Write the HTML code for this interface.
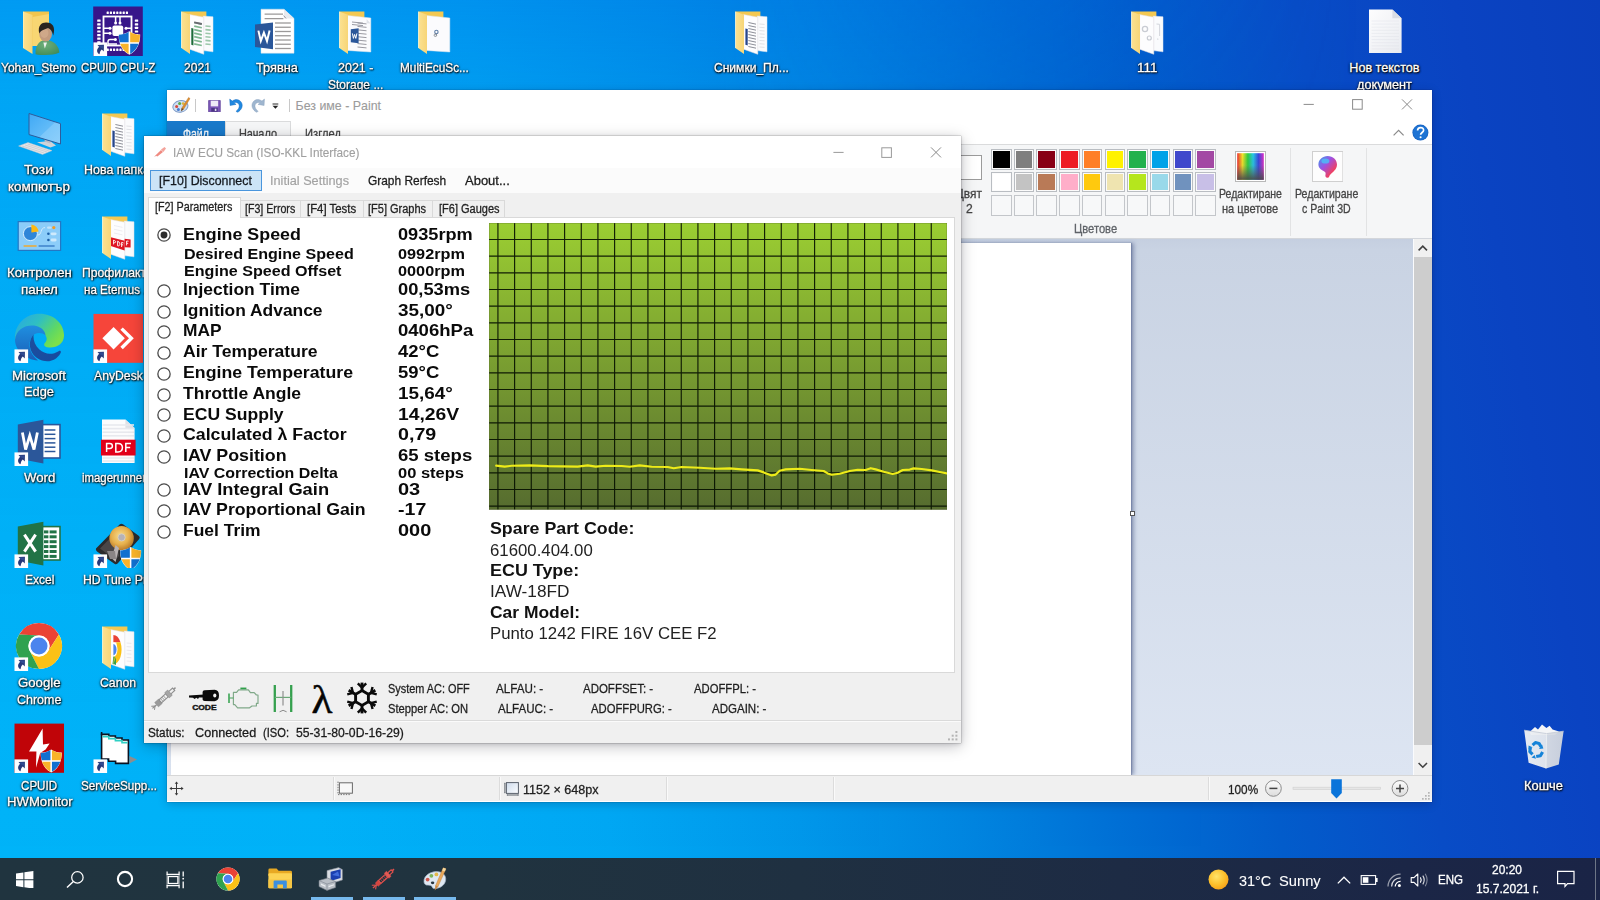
<!DOCTYPE html>
<html><head><meta charset="utf-8"><title>desktop</title><style>
html,body{margin:0;padding:0;}
body{width:1600px;height:900px;overflow:hidden;position:relative;font-family:"Liberation Sans",sans-serif;background:#0a78d7;}
body div,body svg,body span{position:absolute;box-sizing:border-box;}
.t{white-space:nowrap;line-height:1;transform-origin:0 0;}
</style></head>
<body>
<!-- p_desktop -->
<div style="left:0;top:0;width:1600px;height:900px;background:linear-gradient(80deg,#00b4f8 0.7%,#00b2f8 18.9%,#00a8f3 35.3%,#0098ea 46.2%,#0086e0 55.3%,#0070d5 64.4%,#025ccb 73.5%,#084cc6 82.6%,#0a43c2 91.7%,#0a3fbc 100%);"></div>
<div style="left:0;top:0;width:1600px;height:900px;background:linear-gradient(to bottom,rgba(0,100,230,.31) 0%,rgba(0,100,230,.175) 10%,rgba(0,100,230,.10) 30%,rgba(0,100,230,.04) 60%,rgba(0,100,230,0) 100%);-webkit-mask-image:linear-gradient(to right,#000 0,#000 45%,transparent 85%);mask-image:linear-gradient(to right,#000 0,#000 45%,transparent 85%);"></div>
<svg style="left:15px;top:5.5px;" width="50" height="50" viewBox="0 0 50 50"><defs><linearGradient id="uf" x1="0" x2="1"><stop offset="0" stop-color="#fff0ba"/><stop offset=".15" stop-color="#fbe08f"/><stop offset="1" stop-color="#f7d577"/></linearGradient><radialGradient id="ub" cx=".4" cy=".3" r=".8"><stop offset="0" stop-color="#6faf7a"/><stop offset="1" stop-color="#3f8a58"/></radialGradient></defs><path d="M8 5.400 L34 5.400 L34 40 L17 40 L17 12Z" fill="#f2c54d"/><path d="M17.500 11 L34 8 L34 40 L17.500 40Z" fill="#f8d672"/><path d="M8 5.600 L17.500 9 L17.500 48 L8 42Z" fill="url(#uf)"/><path d="M20.6 48.2 C20 42 22.6 36.4 27.6 34.6 L33.8 34.4 C40 35.6 43.8 40.4 44.4 46.6 C38 49.6 27.6 49.6 20.6 48.2Z" fill="url(#ub)"/><path d="M28.4 36.4 L29.8 42.4 L32 36.4Z" fill="#eef3ef"/><ellipse cx="30.6" cy="27.8" rx="6.4" ry="7.6" fill="#c39b7e"/><ellipse cx="29.4" cy="27" rx="4" ry="5" fill="#d2ab8c" opacity=".8"/><path d="M24.200 27.400 C22.400 19 27 16.200 31.400 16.400 C37.600 16.400 40.800 21 38.200 29.400 C37.400 25.400 35.600 23 33 22 C29.600 23.600 26.400 23.800 24.200 27.400Z" fill="#2a2420"/></svg>
<span class="t" style="left:1.31px;top:62.00px;font-size:12.6px;color:#fff;transform:scaleX(0.9519);-webkit-text-stroke:.3px #fff;text-shadow:0 1px 2px rgba(0,0,0,.95),0 0 3px rgba(0,0,0,.8),1px 1px 1.5px rgba(0,0,0,.75),0 0 1px rgba(0,0,0,.6);">Yohan_Stemo</span>
<svg style="left:93px;top:5.5px;" width="50" height="50" viewBox="0 0 50 50"><rect x="0.2" y="0.5" width="49.6" height="49.5" fill="#37168a"/><rect x="10.5" y="10.5" width="28" height="29" fill="none" stroke="#fff" stroke-width="1.8"/><rect x="13.6" y="5.6" width="2.2" height="2.4" rx=".5" fill="#fff"/><rect x="13.6" y="42.6" width="2.2" height="2.4" rx=".5" fill="#fff"/><rect x="16.8" y="5.6" width="2.2" height="2.4" rx=".5" fill="#fff"/><rect x="16.8" y="42.6" width="2.2" height="2.4" rx=".5" fill="#fff"/><rect x="20" y="5.6" width="2.2" height="2.4" rx=".5" fill="#fff"/><rect x="20" y="42.6" width="2.2" height="2.4" rx=".5" fill="#fff"/><rect x="23.2" y="5.6" width="2.2" height="2.4" rx=".5" fill="#fff"/><rect x="23.2" y="42.6" width="2.2" height="2.4" rx=".5" fill="#fff"/><rect x="26.4" y="5.6" width="2.2" height="2.4" rx=".5" fill="#fff"/><rect x="26.4" y="42.6" width="2.2" height="2.4" rx=".5" fill="#fff"/><rect x="29.6" y="5.6" width="2.2" height="2.4" rx=".5" fill="#fff"/><rect x="29.6" y="42.6" width="2.2" height="2.4" rx=".5" fill="#fff"/><rect x="32.8" y="5.6" width="2.2" height="2.4" rx=".5" fill="#fff"/><rect x="32.8" y="42.6" width="2.2" height="2.4" rx=".5" fill="#fff"/><rect x="4.2" y="13.6" width="3.4" height="2.2" rx=".5" fill="#fff"/><rect x="41.8" y="13.6" width="3.4" height="2.2" rx=".5" fill="#fff"/><rect x="4.2" y="17.2" width="3.4" height="2.2" rx=".5" fill="#fff"/><rect x="41.8" y="17.2" width="3.4" height="2.2" rx=".5" fill="#fff"/><rect x="4.2" y="20.8" width="3.4" height="2.2" rx=".5" fill="#fff"/><rect x="41.8" y="20.8" width="3.4" height="2.2" rx=".5" fill="#fff"/><rect x="4.2" y="24.4" width="3.4" height="2.2" rx=".5" fill="#fff"/><rect x="41.8" y="24.4" width="3.4" height="2.2" rx=".5" fill="#fff"/><rect x="4.2" y="28" width="3.4" height="2.2" rx=".5" fill="#fff"/><rect x="41.8" y="28" width="3.4" height="2.2" rx=".5" fill="#fff"/><rect x="4.2" y="31.6" width="3.4" height="2.2" rx=".5" fill="#fff"/><rect x="41.8" y="31.6" width="3.4" height="2.2" rx=".5" fill="#fff"/><rect x="4.2" y="35.2" width="3.4" height="2.2" rx=".5" fill="#fff"/><rect x="41.8" y="35.2" width="3.4" height="2.2" rx=".5" fill="#fff"/><rect x="19.4" y="19.6" width="10.8" height="10.4" rx="2" fill="#fff"/><path d="M22.6 11 L22.6 16.4 M27 11 L27 16.4 M11 22.2 L16.6 22.2 M11 27.2 L16.6 27.2 M38 22.2 L33 22.2 M15 39 L15 35.6 Q15 33.4 17.2 33.4 L21.6 33.4 M15 38 L24 38" stroke="#fff" stroke-width="1.5" fill="none"/><circle cx="22.6" cy="17" r="1.5" fill="#fff"/><circle cx="27" cy="17" r="1.5" fill="#fff"/><circle cx="17" cy="22.2" r="1.5" fill="#fff"/><circle cx="17" cy="27.2" r="1.5" fill="#fff"/><circle cx="33" cy="22.2" r="1.5" fill="#fff"/><circle cx="22.4" cy="33.4" r="1.5" fill="#fff"/><g transform="translate(36.4 37) scale(1.1)"><path d="M0 -11.5 C3.5 -9 7 -8.3 10.5 -8.3 C10.5 0 8 7 0 11.5 C-8 7 -10.5 0 -10.5 -8.3 C-7 -8.3 -3.5 -9 0 -11.5Z" fill="#fff" transform="scale(.935)"/><path d="M-0.7 -10.2 C-3.7 -8.2 -6.6 -7.5 -9.6 -7.4 C-9.6 -4.6 -9.3 -2.6 -8.8 -0.7 L-0.7 -0.7Z" fill="#1170d0"/><path d="M0.7 -10.2 C3.7 -8.2 6.6 -7.5 9.6 -7.4 C9.6 -4.6 9.3 -2.6 8.8 -0.7 L0.7 -0.7Z" fill="#f9b32a"/><path d="M-8.4 0.7 L-0.7 0.7 L-0.7 10 C-4.8 7.4 -7.2 4.3 -8.4 0.7Z" fill="#f9b32a"/><path d="M8.4 0.7 L0.7 0.7 L0.7 10 C4.8 7.4 7.2 4.3 8.4 0.7Z" fill="#1170d0"/></g><g transform="translate(0.5 36.4)"><rect x="0" y="0" width="13.6" height="13.6" fill="#fdfdff"/><path d="M4.0 2.7 L10.4 2.4 L10.3 9.0 L8.3 7.0 C6.9 8.2 6.3 9.8 6.0 11.9 C3.3 10.6 2.5 7.4 5.6 4.4Z" fill="#27397a"/><path d="M5 3.2 L9.8 3 L9.8 6.4 C8 5.6 6.6 5.2 5.6 4.4Z" fill="#34509a" opacity=".8"/></g></svg>
<span class="t" style="left:81.31px;top:62.00px;font-size:12.6px;color:#fff;transform:scaleX(0.9164);-webkit-text-stroke:.3px #fff;text-shadow:0 1px 2px rgba(0,0,0,.95),0 0 3px rgba(0,0,0,.8),1px 1px 1.5px rgba(0,0,0,.75),0 0 1px rgba(0,0,0,.6);">CPUID CPU-Z</span>
<svg style="left:172px;top:5.5px;" width="50" height="50" viewBox="0 0 50 50"><defs><linearGradient id="fgxls" x1="0" x2="1"><stop offset="0" stop-color="#fff0ba"/><stop offset=".12" stop-color="#fbe08f"/><stop offset="1" stop-color="#f7d577"/></linearGradient></defs><path d="M9.3 5.4 L34.4 5.4 L34.4 13 L17 13Z" fill="#f3c851"/><path d="M31.2 10 L41 10.8 L41 45.8 L31.2 44.6Z" fill="#fafbfd" stroke="#dfe5ee" stroke-width=".5"/><path d="M17.6 8.6 L31.8 11.2 L31.8 48.3 L17.6 43.2Z" fill="#fdfdfe" stroke="#e6dcdc" stroke-width=".5"/><path d="M19.3 22 L21.4 22.5 L21.4 39.5 L19.3 38.8Z" fill="#1d6b3a"/><path d="M22.2 16.5 L29.8 18.2" stroke="#7fb791" stroke-width="1.7"/><path d="M22.2 20.05 L29.8 21.75" stroke="#7fb791" stroke-width="1.7"/><path d="M22.2 23.6 L29.8 25.3" stroke="#7fb791" stroke-width="1.7"/><path d="M22.2 27.15 L29.8 28.85" stroke="#7fb791" stroke-width="1.7"/><path d="M22.2 30.7 L29.8 32.4" stroke="#7fb791" stroke-width="1.7"/><path d="M22.2 34.25 L29.8 35.95" stroke="#7fb791" stroke-width="1.7"/><path d="M22.2 37.8 L29.8 39.5" stroke="#7fb791" stroke-width="1.7"/><path d="M22.2 16.3 L29.8 18" stroke="#6a6a72" stroke-width="1.8"/><path d="M33.4 20 L38.6 20.5" stroke="#9cc7aa" stroke-width="1.6"/><path d="M33.4 23.6 L38.6 24.1" stroke="#9cc7aa" stroke-width="1.6"/><path d="M33.4 27.2 L38.6 27.7" stroke="#9cc7aa" stroke-width="1.6"/><path d="M33.4 30.8 L38.6 31.3" stroke="#9cc7aa" stroke-width="1.6"/><path d="M33.4 34.4 L38.6 34.9" stroke="#9cc7aa" stroke-width="1.6"/><path d="M33.4 38 L38.6 38.5" stroke="#9cc7aa" stroke-width="1.6"/><path d="M9.3 5.6 L18 8.8 L18 48 L9.3 42Z" fill="url(#fgxls)"/><path d="M9.5 5.8 L9.5 42" stroke="#fff6d0" stroke-width=".7"/></svg>
<span class="t" style="left:184.31px;top:62.00px;font-size:12.6px;color:#fff;transform:scaleX(0.9591);-webkit-text-stroke:.3px #fff;text-shadow:0 1px 2px rgba(0,0,0,.95),0 0 3px rgba(0,0,0,.8),1px 1px 1.5px rgba(0,0,0,.75),0 0 1px rgba(0,0,0,.6);">2021</span>
<svg style="left:251px;top:5.5px;" width="50" height="50" viewBox="0 0 50 50"><path d="M10 3.2 L33 3.2 L43 12.4 L43 47.2 L10 47.2Z" fill="#fff" stroke="#d6dbe4" stroke-width=".5"/><path d="M33 3.2 L33 12.4 L43 12.4Z" fill="#e7eaef"/><path d="M32.6 9.6 L35 12.4" stroke="#9a9aa0" stroke-width="1"/><path d="M13.6 8.2 L32 8.2 M13.6 12.6 L32.4 12.6" stroke="#9b9999" stroke-width="1.3"/><path d="M24 17 L39.8 17" stroke="#9b9999" stroke-width="1.3"/><path d="M24 21.25 L39.8 21.25" stroke="#9b9999" stroke-width="1.3"/><path d="M24 25.5 L39.8 25.5" stroke="#9b9999" stroke-width="1.3"/><path d="M24 29.75 L39.8 29.75" stroke="#9b9999" stroke-width="1.3"/><path d="M24 34 L39.8 34" stroke="#9b9999" stroke-width="1.3"/><path d="M24 38.25 L39.8 38.25" stroke="#9b9999" stroke-width="1.3"/><path d="M24 42.5 L39.8 42.5" stroke="#9b9999" stroke-width="1.3"/><path d="M4 18.4 L22 16.4 L22 43.2 L4 41Z" fill="#2b579a"/><path d="M7.4 24.6 L9.8 35 L12.9 26.6 L16 35 L18.6 24.6" stroke="#fff" stroke-width="2" fill="none" stroke-linejoin="miter"/></svg>
<span class="t" style="left:256.31px;top:62.00px;font-size:12.6px;color:#fff;transform:scaleX(1.0135);-webkit-text-stroke:.3px #fff;text-shadow:0 1px 2px rgba(0,0,0,.95),0 0 3px rgba(0,0,0,.8),1px 1px 1.5px rgba(0,0,0,.75),0 0 1px rgba(0,0,0,.6);">Трявна</span>
<svg style="left:330px;top:5.5px;" width="50" height="50" viewBox="0 0 50 50"><defs><linearGradient id="fgdoc" x1="0" x2="1"><stop offset="0" stop-color="#fff0ba"/><stop offset=".12" stop-color="#fbe08f"/><stop offset="1" stop-color="#f7d577"/></linearGradient></defs><path d="M9.3 5.4 L34.4 5.4 L34.4 13 L17 13Z" fill="#f3c851"/><path d="M17 9.4 L40.8 12 L40.8 46 L17 44.4Z" fill="#fbfbfd" stroke="#e1e4ea" stroke-width=".5"/><path d="M27.5 17 L36.5 17.9" stroke="#9a9aa2" stroke-width="1"/><path d="M27.5 20.4286 L36.5 21.3286" stroke="#9a9aa2" stroke-width="1"/><path d="M27.5 23.8571 L36.5 24.7571" stroke="#9a9aa2" stroke-width="1"/><path d="M27.5 27.2857 L36.5 28.1857" stroke="#9a9aa2" stroke-width="1"/><path d="M27.5 30.7143 L36.5 31.6143" stroke="#9a9aa2" stroke-width="1"/><path d="M27.5 34.1429 L36.5 35.0429" stroke="#9a9aa2" stroke-width="1"/><path d="M27.5 37.5714 L36.5 38.4714" stroke="#9a9aa2" stroke-width="1"/><path d="M27.5 41 L36.5 41.9" stroke="#9a9aa2" stroke-width="1"/><path d="M22 16 L33 17.1" stroke="#9a9aa2" stroke-width="1"/><path d="M22 18.5 L33 19.6" stroke="#9a9aa2" stroke-width="1"/><path d="M36.6 13 L40.6 17.6 L36.6 17.2Z" fill="#dfe2e8"/><path d="M20.8 23.2 L28.6 22.2 L28.6 37.2 L20.8 36.2Z" fill="#2b579a"/><path d="M22.4 27.4 L23.4 32.4 L24.6 28.4 L25.8 32.4 L26.9 27.4" stroke="#fff" stroke-width="1" fill="none"/><path d="M9.3 5.6 L18 8.8 L18 48 L9.3 42Z" fill="url(#fgdoc)"/><path d="M9.5 5.8 L9.5 42" stroke="#fff6d0" stroke-width=".7"/></svg>
<span class="t" style="left:337.81px;top:62.00px;font-size:12.6px;color:#fff;transform:scaleX(0.9907);-webkit-text-stroke:.3px #fff;text-shadow:0 1px 2px rgba(0,0,0,.95),0 0 3px rgba(0,0,0,.8),1px 1px 1.5px rgba(0,0,0,.75),0 0 1px rgba(0,0,0,.6);">2021 -</span>
<span class="t" style="left:327.81px;top:79.00px;font-size:12.6px;color:#fff;transform:scaleX(0.9531);-webkit-text-stroke:.3px #fff;text-shadow:0 1px 2px rgba(0,0,0,.95),0 0 3px rgba(0,0,0,.8),1px 1px 1.5px rgba(0,0,0,.75),0 0 1px rgba(0,0,0,.6);">Storage ...</span>
<svg style="left:409px;top:5.5px;" width="50" height="50" viewBox="0 0 50 50"><defs><linearGradient id="fggear" x1="0" x2="1"><stop offset="0" stop-color="#fff0ba"/><stop offset=".12" stop-color="#fbe08f"/><stop offset="1" stop-color="#f7d577"/></linearGradient></defs><path d="M9.3 5.4 L34.4 5.4 L34.4 13 L17 13Z" fill="#f3c851"/><path d="M17 9.4 L40.8 12 L40.8 46 L17 44.4Z" fill="#fbfbfd" stroke="#e1e4ea" stroke-width=".5"/><circle cx="27.4" cy="26" r="1.7" fill="none" stroke="#5f7fa8" stroke-width="1.1"/><path d="M26.2 29 L27.8 29.6 L27.4 27.6" fill="#6f7b8c"/><circle cx="26.4" cy="29.2" r="1.3" fill="none" stroke="#7a8088" stroke-width=".8"/><path d="M9.3 5.6 L18 8.8 L18 48 L9.3 42Z" fill="url(#fggear)"/><path d="M9.5 5.8 L9.5 42" stroke="#fff6d0" stroke-width=".7"/></svg>
<span class="t" style="left:400.31px;top:62.00px;font-size:12.6px;color:#fff;transform:scaleX(0.9374);-webkit-text-stroke:.3px #fff;text-shadow:0 1px 2px rgba(0,0,0,.95),0 0 3px rgba(0,0,0,.8),1px 1px 1.5px rgba(0,0,0,.75),0 0 1px rgba(0,0,0,.6);">MultiEcuSc...</span>
<svg style="left:726px;top:5.5px;" width="50" height="50" viewBox="0 0 50 50"><defs><linearGradient id="fgpic" x1="0" x2="1"><stop offset="0" stop-color="#fff0ba"/><stop offset=".12" stop-color="#fbe08f"/><stop offset="1" stop-color="#f7d577"/></linearGradient></defs><path d="M9.3 5.4 L34.4 5.4 L34.4 13 L17 13Z" fill="#f3c851"/><path d="M31.2 10 L41 10.8 L41 45.8 L31.2 44.6Z" fill="#fafbfd" stroke="#dfe5ee" stroke-width=".5"/><path d="M17.6 8.6 L31.8 11.2 L31.8 48.3 L17.6 43.2Z" fill="#fdfdfe" stroke="#e6dcdc" stroke-width=".5"/><path d="M19.4 22.5 L21.7 23.1 L21.7 39.6 L19.4 38.8Z" fill="#27468c"/><path d="M22.4 16.5 L30 18.172" stroke="#8d8f98" stroke-width="1"/><path d="M22.4 19.5 L30 21.172" stroke="#8d8f98" stroke-width="1"/><path d="M22.4 22.5 L30 24.172" stroke="#8d8f98" stroke-width="1"/><path d="M22.4 25.5 L30 27.172" stroke="#8d8f98" stroke-width="1"/><path d="M22.4 28.5 L30 30.172" stroke="#8d8f98" stroke-width="1"/><path d="M22.4 31.5 L30 33.172" stroke="#8d8f98" stroke-width="1"/><path d="M22.4 34.5 L30 36.172" stroke="#8d8f98" stroke-width="1"/><path d="M22.4 37.5 L30 39.172" stroke="#8d8f98" stroke-width="1"/><path d="M22.4 40.5 L30 42.172" stroke="#8d8f98" stroke-width="1"/><path d="M33.4 18 L38.6 18.416" stroke="#d9dbe0" stroke-width="0.8"/><path d="M33.4 21.2857 L38.6 21.7017" stroke="#d9dbe0" stroke-width="0.8"/><path d="M33.4 24.5714 L38.6 24.9874" stroke="#d9dbe0" stroke-width="0.8"/><path d="M33.4 27.8571 L38.6 28.2731" stroke="#d9dbe0" stroke-width="0.8"/><path d="M33.4 31.1429 L38.6 31.5589" stroke="#d9dbe0" stroke-width="0.8"/><path d="M33.4 34.4286 L38.6 34.8446" stroke="#d9dbe0" stroke-width="0.8"/><path d="M33.4 37.7143 L38.6 38.1303" stroke="#d9dbe0" stroke-width="0.8"/><path d="M33.4 41 L38.6 41.416" stroke="#d9dbe0" stroke-width="0.8"/><path d="M9.3 5.6 L18 8.8 L18 48 L9.3 42Z" fill="url(#fgpic)"/><path d="M9.5 5.8 L9.5 42" stroke="#fff6d0" stroke-width=".7"/></svg>
<span class="t" style="left:714.31px;top:62.00px;font-size:12.6px;color:#fff;transform:scaleX(0.9576);-webkit-text-stroke:.3px #fff;text-shadow:0 1px 2px rgba(0,0,0,.95),0 0 3px rgba(0,0,0,.8),1px 1px 1.5px rgba(0,0,0,.75),0 0 1px rgba(0,0,0,.6);">Снимки_Пл...</span>
<svg style="left:1122px;top:5.5px;" width="50" height="50" viewBox="0 0 50 50"><defs><linearGradient id="fggray" x1="0" x2="1"><stop offset="0" stop-color="#fff0ba"/><stop offset=".12" stop-color="#fbe08f"/><stop offset="1" stop-color="#f7d577"/></linearGradient></defs><path d="M9.3 5.4 L34.4 5.4 L34.4 13 L17 13Z" fill="#f3c851"/><path d="M31.2 10 L41 10.8 L41 45.8 L31.2 44.6Z" fill="#fafbfd" stroke="#dfe5ee" stroke-width=".5"/><path d="M17.6 8.6 L31.8 11.2 L31.8 48.3 L17.6 43.2Z" fill="#fdfdfe" stroke="#e6dcdc" stroke-width=".5"/><circle cx="23" cy="23" r="2.6" fill="none" stroke="#c9ccd3" stroke-width="1.3"/><circle cx="27.3" cy="32" r="2" fill="none" stroke="#c9ccd3" stroke-width="1.2"/><path d="M34.5 18 L37.6 18.3 L37.6 30 M35 33 L36.4 33.2" stroke="#d3d6dc" stroke-width="1" fill="none"/><path d="M9.3 5.6 L18 8.8 L18 48 L9.3 42Z" fill="url(#fggray)"/><path d="M9.5 5.8 L9.5 42" stroke="#fff6d0" stroke-width=".7"/></svg>
<span class="t" style="left:1137.31px;top:62.00px;font-size:12.6px;color:#fff;transform:scaleX(1.0642);-webkit-text-stroke:.3px #fff;text-shadow:0 1px 2px rgba(0,0,0,.95),0 0 3px rgba(0,0,0,.8),1px 1px 1.5px rgba(0,0,0,.75),0 0 1px rgba(0,0,0,.6);">111</span>
<svg style="left:1359px;top:5.5px;" width="50" height="50" viewBox="0 0 50 50"><defs><linearGradient id="td" x1="0" y1="0" x2="1" y2="1"><stop offset="0" stop-color="#fdfdfe"/><stop offset="1" stop-color="#e9ebf0"/></linearGradient></defs><path d="M10 3.5 L33.4 3.5 L42.6 12.2 L42.6 47 L10 47Z" fill="url(#td)"/><path d="M33.4 3.5 L33.4 12.2 L42.6 12.2Z" fill="#dadde4"/><path d="M12.6 15 L40 15" stroke="#e1e3e8" stroke-width=".5"/><path d="M12.6 18.1 L40 18.1" stroke="#e1e3e8" stroke-width=".5"/><path d="M12.6 21.2 L40 21.2" stroke="#e1e3e8" stroke-width=".5"/><path d="M12.6 24.3 L40 24.3" stroke="#e1e3e8" stroke-width=".5"/><path d="M12.6 27.4 L40 27.4" stroke="#e1e3e8" stroke-width=".5"/><path d="M12.6 30.5 L40 30.5" stroke="#e1e3e8" stroke-width=".5"/><path d="M12.6 33.6 L40 33.6" stroke="#e1e3e8" stroke-width=".5"/><path d="M12.6 36.7 L40 36.7" stroke="#e1e3e8" stroke-width=".5"/><path d="M12.6 39.8 L40 39.8" stroke="#e1e3e8" stroke-width=".5"/><path d="M12.6 42.9 L40 42.9" stroke="#e1e3e8" stroke-width=".5"/></svg>
<span class="t" style="left:1349.31px;top:62.00px;font-size:12.6px;color:#fff;-webkit-text-stroke:.3px #fff;text-shadow:0 1px 2px rgba(0,0,0,.95),0 0 3px rgba(0,0,0,.8),1px 1px 1.5px rgba(0,0,0,.75),0 0 1px rgba(0,0,0,.6);">Нов текстов</span>
<span class="t" style="left:1356.81px;top:79.00px;font-size:12.6px;color:#fff;transform:scaleX(1.0062);-webkit-text-stroke:.3px #fff;text-shadow:0 1px 2px rgba(0,0,0,.95),0 0 3px rgba(0,0,0,.8),1px 1px 1.5px rgba(0,0,0,.75),0 0 1px rgba(0,0,0,.6);">документ</span>
<svg style="left:14px;top:108px;" width="50" height="50" viewBox="0 0 50 50"><defs><linearGradient id="pc" x1="0" y1="0" x2="1" y2="1"><stop offset="0" stop-color="#3fa9f5"/><stop offset=".55" stop-color="#62bbf8"/><stop offset=".56" stop-color="#7cc7fa"/><stop offset="1" stop-color="#8fd0fb"/></linearGradient></defs><path d="M23 34.2 L36 33 L42 37.6 L36.4 39.6Z" fill="#cfd3d8"/><path d="M30.6 31 L36.4 33.4 L36.4 35.4 L30.6 33.4Z" fill="#b9bec6"/><path d="M15 5.5 L46.5 15.6 L46.5 36 L15 26.6Z" fill="url(#pc)" stroke="#2e5c9c" stroke-width="1"/><path d="M4.6 38 L14 34.6 L38 42.6 L28.6 46.4Z" fill="#e3e5e8" stroke="#c2c5ca" stroke-width=".5"/><path d="M8 38 L30 45 M11 37 L33 44 M13.6 36 L35.6 43.2" stroke="#c3c6cc" stroke-width=".7"/></svg>
<span class="t" style="left:24.31px;top:164.00px;font-size:12.6px;color:#fff;transform:scaleX(1.0946);-webkit-text-stroke:.3px #fff;text-shadow:0 1px 2px rgba(0,0,0,.95),0 0 3px rgba(0,0,0,.8),1px 1px 1.5px rgba(0,0,0,.75),0 0 1px rgba(0,0,0,.6);">Този</span>
<span class="t" style="left:8.31px;top:181.00px;font-size:12.6px;color:#fff;transform:scaleX(1.0679);-webkit-text-stroke:.3px #fff;text-shadow:0 1px 2px rgba(0,0,0,.95),0 0 3px rgba(0,0,0,.8),1px 1px 1.5px rgba(0,0,0,.75),0 0 1px rgba(0,0,0,.6);">компютър</span>
<svg style="left:93px;top:108px;" width="50" height="50" viewBox="0 0 50 50"><defs><linearGradient id="fgtxt" x1="0" x2="1"><stop offset="0" stop-color="#fff0ba"/><stop offset=".12" stop-color="#fbe08f"/><stop offset="1" stop-color="#f7d577"/></linearGradient></defs><path d="M9.3 5.4 L34.4 5.4 L34.4 13 L17 13Z" fill="#f3c851"/><path d="M31.2 10 L41 10.8 L41 45.8 L31.2 44.6Z" fill="#fafbfd" stroke="#dfe5ee" stroke-width=".5"/><path d="M17.6 8.6 L31.8 11.2 L31.8 48.3 L17.6 43.2Z" fill="#fdfdfe" stroke="#e6dcdc" stroke-width=".5"/><path d="M19.4 22.5 L21.7 23.1 L21.7 39.6 L19.4 38.8Z" fill="#27468c"/><path d="M22.4 16.5 L30 18.172" stroke="#8d8f98" stroke-width="1"/><path d="M22.4 19.5 L30 21.172" stroke="#8d8f98" stroke-width="1"/><path d="M22.4 22.5 L30 24.172" stroke="#8d8f98" stroke-width="1"/><path d="M22.4 25.5 L30 27.172" stroke="#8d8f98" stroke-width="1"/><path d="M22.4 28.5 L30 30.172" stroke="#8d8f98" stroke-width="1"/><path d="M22.4 31.5 L30 33.172" stroke="#8d8f98" stroke-width="1"/><path d="M22.4 34.5 L30 36.172" stroke="#8d8f98" stroke-width="1"/><path d="M22.4 37.5 L30 39.172" stroke="#8d8f98" stroke-width="1"/><path d="M22.4 40.5 L30 42.172" stroke="#8d8f98" stroke-width="1"/><path d="M33.4 18 L38.6 18.416" stroke="#d9dbe0" stroke-width="0.8"/><path d="M33.4 21.2857 L38.6 21.7017" stroke="#d9dbe0" stroke-width="0.8"/><path d="M33.4 24.5714 L38.6 24.9874" stroke="#d9dbe0" stroke-width="0.8"/><path d="M33.4 27.8571 L38.6 28.2731" stroke="#d9dbe0" stroke-width="0.8"/><path d="M33.4 31.1429 L38.6 31.5589" stroke="#d9dbe0" stroke-width="0.8"/><path d="M33.4 34.4286 L38.6 34.8446" stroke="#d9dbe0" stroke-width="0.8"/><path d="M33.4 37.7143 L38.6 38.1303" stroke="#d9dbe0" stroke-width="0.8"/><path d="M33.4 41 L38.6 41.416" stroke="#d9dbe0" stroke-width="0.8"/><path d="M9.3 5.6 L18 8.8 L18 48 L9.3 42Z" fill="url(#fgtxt)"/><path d="M9.5 5.8 L9.5 42" stroke="#fff6d0" stroke-width=".7"/></svg>
<span class="t" style="left:83.81px;top:164.00px;font-size:12.6px;color:#fff;transform:scaleX(0.9894);-webkit-text-stroke:.3px #fff;text-shadow:0 1px 2px rgba(0,0,0,.95),0 0 3px rgba(0,0,0,.8),1px 1px 1.5px rgba(0,0,0,.75),0 0 1px rgba(0,0,0,.6);">Нова папка</span>
<svg style="left:14px;top:210.5px;" width="50" height="50" viewBox="0 0 50 50"><rect x="4.2" y="10.6" width="42.4" height="28.8" fill="#8ccdf9" stroke="#2377c4" stroke-width="1.2"/><circle cx="16.4" cy="22.6" r="7" fill="#2f86d8" stroke="#d8efff" stroke-width="1"/><path d="M17.4 21.6 L17.4 13.6 A8 8 0 0 1 24.6 20.6Z" fill="#fdb813"/><path d="M24 24 C28 24 26 16.6 31 16.6" stroke="#d5ecfd" stroke-width="1" fill="none"/><circle cx="39.8" cy="16.6" r="1.6" fill="#f59a23"/><rect x="33" y="15.4" width="4.6" height="2.4" rx="1.2" fill="#c4e4fb"/><circle cx="34.4" cy="22.8" r="1.3" fill="#1c5fa8"/><rect x="36.6" y="21.4" width="6" height="2.8" rx="1.4" fill="#cfeafc"/><circle cx="34.4" cy="29" r="1.3" fill="#1c5fa8"/><rect x="36.6" y="27.6" width="6" height="2.8" rx="1.4" fill="#cfeafc"/><path d="M9.6 35 L22.6 35" stroke="#f5a623" stroke-width="1.4"/><path d="M24.6 35 L40.6 35" stroke="#2b6fbe" stroke-width="1.2"/></svg>
<span class="t" style="left:6.81px;top:267.00px;font-size:12.6px;color:#fff;transform:scaleX(1.0447);-webkit-text-stroke:.3px #fff;text-shadow:0 1px 2px rgba(0,0,0,.95),0 0 3px rgba(0,0,0,.8),1px 1px 1.5px rgba(0,0,0,.75),0 0 1px rgba(0,0,0,.6);">Контролен</span>
<span class="t" style="left:21.31px;top:284.00px;font-size:12.6px;color:#fff;transform:scaleX(1.0624);-webkit-text-stroke:.3px #fff;text-shadow:0 1px 2px rgba(0,0,0,.95),0 0 3px rgba(0,0,0,.8),1px 1px 1.5px rgba(0,0,0,.75),0 0 1px rgba(0,0,0,.6);">панел</span>
<svg style="left:93px;top:210.5px;" width="50" height="50" viewBox="0 0 50 50"><defs><linearGradient id="fgpdf" x1="0" x2="1"><stop offset="0" stop-color="#fff0ba"/><stop offset=".12" stop-color="#fbe08f"/><stop offset="1" stop-color="#f7d577"/></linearGradient></defs><path d="M9.3 5.4 L34.4 5.4 L34.4 13 L17 13Z" fill="#f3c851"/><path d="M31.2 10 L41 10.8 L41 45.8 L31.2 44.6Z" fill="#fafbfd" stroke="#dfe5ee" stroke-width=".5"/><path d="M17.6 8.6 L31.8 11.2 L31.8 48.3 L17.6 43.2Z" fill="#fdfdfe" stroke="#e6dcdc" stroke-width=".5"/><path d="M17.8 26.2 L31.6 29.8 L31.6 39.4 L17.8 35Z" fill="#de1622"/><path d="M31.6 27.8 L37.6 28.4 L37.6 36.6 L31.6 36.2Z" fill="#de1622"/><path d="M20.6 29 L20.6 33.4 M20.6 29.2 C23.4 29.8 23.4 32.2 20.6 31.6 M24.6 30.2 L24.6 34.8 C27.6 35.6 27.6 31 24.6 30.2 M28.6 31.4 L28.6 36 M28.6 31.4 L30.6 32 M28.6 33.6 L30.2 34" stroke="#fff" stroke-width=".9" fill="none"/><path d="M33.6 30 L33.6 34.4 M33.6 30 L35.6 30.2 M33.6 32.2 L35.2 32.4" stroke="#fff" stroke-width=".9" fill="none"/><path d="M21 14.5 L29.5 16.37" stroke="#e9e9ee" stroke-width="0.8"/><path d="M21 18.25 L29.5 20.12" stroke="#e9e9ee" stroke-width="0.8"/><path d="M21 22 L29.5 23.87" stroke="#e9e9ee" stroke-width="0.8"/><path d="M9.3 5.6 L18 8.8 L18 48 L9.3 42Z" fill="url(#fgpdf)"/><path d="M9.5 5.8 L9.5 42" stroke="#fff6d0" stroke-width=".7"/></svg>
<span class="t" style="left:82.31px;top:267.00px;font-size:12.6px;color:#fff;transform:scaleX(0.9675);-webkit-text-stroke:.3px #fff;text-shadow:0 1px 2px rgba(0,0,0,.95),0 0 3px rgba(0,0,0,.8),1px 1px 1.5px rgba(0,0,0,.75),0 0 1px rgba(0,0,0,.6);">Профилакти</span>
<span class="t" style="left:83.81px;top:284.00px;font-size:12.6px;color:#fff;transform:scaleX(0.9202);-webkit-text-stroke:.3px #fff;text-shadow:0 1px 2px rgba(0,0,0,.95),0 0 3px rgba(0,0,0,.8),1px 1px 1.5px rgba(0,0,0,.75),0 0 1px rgba(0,0,0,.6);">на Eternus ...</span>
<svg style="left:14px;top:313px;" width="50" height="50" viewBox="0 0 50 50"><defs><linearGradient id="e1" x1="0" y1="0" x2="1" y2="0.6"><stop offset="0" stop-color="#27a6e8"/><stop offset=".45" stop-color="#2fbfc2"/><stop offset=".8" stop-color="#5fd864"/><stop offset="1" stop-color="#7ce04a"/></linearGradient><linearGradient id="e2" x1="0" y1="0" x2="0" y2="1"><stop offset="0" stop-color="#1f8fe0"/><stop offset="1" stop-color="#1a5fb8"/></linearGradient><linearGradient id="e3" x1="0" y1="0" x2="1" y2="1"><stop offset="0" stop-color="#1d4f9f"/><stop offset="1" stop-color="#174a9e"/></linearGradient></defs><path d="M1 27 C0 12 11 0.8 25.5 0.8 C40 0.8 50.4 11 50 23 C49.6 30.6 43.6 34.6 35.4 34.4 C29.6 34.2 29.2 31.4 31.2 29.6 C33.6 27.2 33.2 22.6 29.4 20.4 C24 17.4 12 15.2 1 27Z" fill="url(#e1)"/><path d="M1 27 C2 16 12 11.6 20 12.6 C26.6 13.4 31 17.4 31.6 22.4 C27 18.6 20.4 19.4 17.4 24.4 C14 30 14.6 40 24 47.4 C11 46.6 1.4 37.6 1 27Z" fill="url(#e2)"/><path d="M19.6 21.6 C14.6 27 14.6 36 19.6 42 C24.6 48 34.6 50.6 42 45.4 C44.6 43.4 46.4 41 47 39 C46.6 37.6 45.6 37.6 44.6 38.2 C38.6 42 30.6 41.6 25.4 36.6 C20.6 32 19 26.6 19.6 21.6Z" fill="url(#e3)"/><g transform="translate(0.5 36.4)"><rect x="0" y="0" width="13.6" height="13.6" fill="#fdfdff"/><path d="M4.0 2.7 L10.4 2.4 L10.3 9.0 L8.3 7.0 C6.9 8.2 6.3 9.8 6.0 11.9 C3.3 10.6 2.5 7.4 5.6 4.4Z" fill="#27397a"/><path d="M5 3.2 L9.8 3 L9.8 6.4 C8 5.6 6.6 5.2 5.6 4.4Z" fill="#34509a" opacity=".8"/></g></svg>
<span class="t" style="left:12.31px;top:370.00px;font-size:12.6px;color:#fff;transform:scaleX(1.0546);-webkit-text-stroke:.3px #fff;text-shadow:0 1px 2px rgba(0,0,0,.95),0 0 3px rgba(0,0,0,.8),1px 1px 1.5px rgba(0,0,0,.75),0 0 1px rgba(0,0,0,.6);">Microsoft</span>
<span class="t" style="left:23.81px;top:386.00px;font-size:12.6px;color:#fff;transform:scaleX(1.0158);-webkit-text-stroke:.3px #fff;text-shadow:0 1px 2px rgba(0,0,0,.95),0 0 3px rgba(0,0,0,.8),1px 1px 1.5px rgba(0,0,0,.75),0 0 1px rgba(0,0,0,.6);">Edge</span>
<svg style="left:93px;top:313px;" width="50" height="50" viewBox="0 0 50 50"><rect x="0.5" y="0.9" width="50" height="48.9" fill="#f6453a"/><path d="M9.4 25.2 L20.6 14 L31.8 25.2 L20.6 36.4Z" fill="#fff"/><path d="M29.8 14.4 L40.8 25.2 L29.8 36.2 L27.4 33.8 L36 25.2 L27.4 16.8Z" fill="#fff"/><g transform="translate(0.5 36.4)"><rect x="0" y="0" width="13.6" height="13.6" fill="#fdfdff"/><path d="M4.0 2.7 L10.4 2.4 L10.3 9.0 L8.3 7.0 C6.9 8.2 6.3 9.8 6.0 11.9 C3.3 10.6 2.5 7.4 5.6 4.4Z" fill="#27397a"/><path d="M5 3.2 L9.8 3 L9.8 6.4 C8 5.6 6.6 5.2 5.6 4.4Z" fill="#34509a" opacity=".8"/></g></svg>
<span class="t" style="left:93.81px;top:370.00px;font-size:12.6px;color:#fff;transform:scaleX(0.9698);-webkit-text-stroke:.3px #fff;text-shadow:0 1px 2px rgba(0,0,0,.95),0 0 3px rgba(0,0,0,.8),1px 1px 1.5px rgba(0,0,0,.75),0 0 1px rgba(0,0,0,.6);">AnyDesk</span>
<svg style="left:14px;top:415.5px;" width="50" height="50" viewBox="0 0 50 50"><rect x="28" y="8.6" width="18" height="33.4" fill="#fff" stroke="#2b579a" stroke-width="1.6"/><path d="M30.6 14 L41.4 14" stroke="#2b579a" stroke-width="1.5"/><path d="M30.6 18.3 L41.4 18.3" stroke="#2b579a" stroke-width="1.5"/><path d="M30.6 22.6 L41.4 22.6" stroke="#2b579a" stroke-width="1.5"/><path d="M30.6 26.9 L41.4 26.9" stroke="#2b579a" stroke-width="1.5"/><path d="M30.6 31.2 L41.4 31.2" stroke="#2b579a" stroke-width="1.5"/><path d="M30.6 35.5 L41.4 35.5" stroke="#2b579a" stroke-width="1.5"/><path d="M3.8 8.6 L29.4 3.8 L29.4 47.4 L3.8 42.6Z" fill="#2b579a"/><path d="M8.4 16.6 L11.6 33.6 L15.8 19.6 L20 33.6 L23.4 16.6" stroke="#fff" stroke-width="2.8" fill="none"/><g transform="translate(0.5 36.4)"><rect x="0" y="0" width="13.6" height="13.6" fill="#fdfdff"/><path d="M4.0 2.7 L10.4 2.4 L10.3 9.0 L8.3 7.0 C6.9 8.2 6.3 9.8 6.0 11.9 C3.3 10.6 2.5 7.4 5.6 4.4Z" fill="#27397a"/><path d="M5 3.2 L9.8 3 L9.8 6.4 C8 5.6 6.6 5.2 5.6 4.4Z" fill="#34509a" opacity=".8"/></g></svg>
<span class="t" style="left:23.81px;top:472.00px;font-size:12.6px;color:#fff;transform:scaleX(1.0506);-webkit-text-stroke:.3px #fff;text-shadow:0 1px 2px rgba(0,0,0,.95),0 0 3px rgba(0,0,0,.8),1px 1px 1.5px rgba(0,0,0,.75),0 0 1px rgba(0,0,0,.6);">Word</span>
<svg style="left:93px;top:415.5px;" width="50" height="50" viewBox="0 0 50 50"><path d="M9 3.4 L32.4 3.4 L41.6 12 L41.6 47 L9 47Z" fill="#fcfcfd"/><path d="M32.4 3.4 L32.4 12 L41.6 12Z" fill="#dfe1e6"/><path d="M9.6 9 L41 9" stroke="#e8e9ee" stroke-width="1.6"/><path d="M9.6 12.6 L41 12.6" stroke="#e8e9ee" stroke-width="1.6"/><path d="M9.6 16.2 L41 16.2" stroke="#e8e9ee" stroke-width="1.6"/><path d="M9.6 19.8 L41 19.8" stroke="#e8e9ee" stroke-width="1.6"/><path d="M9.6 42 L41 42 M9.6 45 L41 45" stroke="#e8e9ee" stroke-width="1.4"/><rect x="8" y="23.7" width="34.6" height="15.8" fill="#e2001a"/><path d="M13.6 36 L13.6 27.4 L16.8 27.4 Q19.4 27.4 19.4 30 Q19.4 32.4 16.8 32.4 L13.6 32.4 M22.8 27.4 L22.8 36 L25 36 Q29.4 36 29.4 31.6 Q29.4 27.4 25 27.4Z M32.8 36 L32.8 27.4 L38 27.4 M32.8 31.6 L37.2 31.6" stroke="#fff" stroke-width="1.5" fill="none"/></svg>
<span class="t" style="left:81.81px;top:472.00px;font-size:12.6px;color:#fff;transform:scaleX(0.9052);-webkit-text-stroke:.3px #fff;text-shadow:0 1px 2px rgba(0,0,0,.95),0 0 3px rgba(0,0,0,.8),1px 1px 1.5px rgba(0,0,0,.75),0 0 1px rgba(0,0,0,.6);">imagerunner...</span>
<svg style="left:14px;top:518px;" width="50" height="50" viewBox="0 0 50 50"><rect x="28" y="8.6" width="18" height="33.4" fill="#fff" stroke="#217346" stroke-width="1.6"/><rect x="30" y="12.4" width="4.4" height="3" fill="#217346"/><rect x="35.6" y="12.4" width="7" height="3" fill="#217346"/><rect x="30" y="17.3" width="4.4" height="3" fill="#217346"/><rect x="35.6" y="17.3" width="7" height="3" fill="#217346"/><rect x="30" y="22.2" width="4.4" height="3" fill="#217346"/><rect x="35.6" y="22.2" width="7" height="3" fill="#217346"/><rect x="30" y="27.1" width="4.4" height="3" fill="#217346"/><rect x="35.6" y="27.1" width="7" height="3" fill="#217346"/><rect x="30" y="32" width="4.4" height="3" fill="#217346"/><rect x="35.6" y="32" width="7" height="3" fill="#217346"/><rect x="30" y="36.9" width="4.4" height="3" fill="#217346"/><rect x="35.6" y="36.9" width="7" height="3" fill="#217346"/><path d="M3.8 8.6 L29.4 3.8 L29.4 47.4 L3.8 42.6Z" fill="#217346"/><path d="M10.4 16.6 L21.6 33.6 M21.6 16.6 L10.4 33.6" stroke="#fff" stroke-width="3" fill="none"/><g transform="translate(0.5 36.4)"><rect x="0" y="0" width="13.6" height="13.6" fill="#fdfdff"/><path d="M4.0 2.7 L10.4 2.4 L10.3 9.0 L8.3 7.0 C6.9 8.2 6.3 9.8 6.0 11.9 C3.3 10.6 2.5 7.4 5.6 4.4Z" fill="#27397a"/><path d="M5 3.2 L9.8 3 L9.8 6.4 C8 5.6 6.6 5.2 5.6 4.4Z" fill="#34509a" opacity=".8"/></g></svg>
<span class="t" style="left:24.81px;top:574.00px;font-size:12.6px;color:#fff;transform:scaleX(0.9542);-webkit-text-stroke:.3px #fff;text-shadow:0 1px 2px rgba(0,0,0,.95),0 0 3px rgba(0,0,0,.8),1px 1px 1.5px rgba(0,0,0,.75),0 0 1px rgba(0,0,0,.6);">Excel</span>
<svg style="left:93px;top:518px;" width="50" height="50" viewBox="0 0 50 50"><defs><radialGradient id="hp" cx=".45" cy=".4" r=".6"><stop offset="0" stop-color="#f7dc8e"/><stop offset=".6" stop-color="#e7b04c"/><stop offset="1" stop-color="#b87a2a"/></radialGradient></defs><path d="M3 30.6 L26.6 6.4 Q28.2 5 30 6.2 L46 18 Q47.4 19.4 46.2 21 L24.6 45.6 Q23 47 21.4 45.8 L4 33.6 Q2.4 32.2 3 30.6Z" fill="#2b2a2c"/><path d="M7 30.6 L22.6 14.6 L26 38 L22.4 42Z" fill="#4a4648"/><circle cx="28.6" cy="20.2" r="12.2" fill="url(#hp)"/><circle cx="28.6" cy="19.4" r="3.6" fill="#b6b2b6" stroke="#d8d2c8" stroke-width=".8"/><path d="M22.6 27 L26 30 L22.6 44 L18.4 40Z" fill="#b8b2b4"/><path d="M14 33 L22 33 L23 41 L17 41Z" fill="#8a8486"/><g transform="translate(37.6 40.6) scale(1.08)"><path d="M0 -11.5 C3.5 -9 7 -8.3 10.5 -8.3 C10.5 0 8 7 0 11.5 C-8 7 -10.5 0 -10.5 -8.3 C-7 -8.3 -3.5 -9 0 -11.5Z" fill="#fff" transform="scale(.935)"/><path d="M-0.7 -10.2 C-3.7 -8.2 -6.6 -7.5 -9.6 -7.4 C-9.6 -4.6 -9.3 -2.6 -8.8 -0.7 L-0.7 -0.7Z" fill="#1170d0"/><path d="M0.7 -10.2 C3.7 -8.2 6.6 -7.5 9.6 -7.4 C9.6 -4.6 9.3 -2.6 8.8 -0.7 L0.7 -0.7Z" fill="#f9b32a"/><path d="M-8.4 0.7 L-0.7 0.7 L-0.7 10 C-4.8 7.4 -7.2 4.3 -8.4 0.7Z" fill="#f9b32a"/><path d="M8.4 0.7 L0.7 0.7 L0.7 10 C4.8 7.4 7.2 4.3 8.4 0.7Z" fill="#1170d0"/></g><g transform="translate(0.5 36.4)"><rect x="0" y="0" width="13.6" height="13.6" fill="#fdfdff"/><path d="M4.0 2.7 L10.4 2.4 L10.3 9.0 L8.3 7.0 C6.9 8.2 6.3 9.8 6.0 11.9 C3.3 10.6 2.5 7.4 5.6 4.4Z" fill="#27397a"/><path d="M5 3.2 L9.8 3 L9.8 6.4 C8 5.6 6.6 5.2 5.6 4.4Z" fill="#34509a" opacity=".8"/></g></svg>
<span class="t" style="left:83.31px;top:574.00px;font-size:12.6px;color:#fff;transform:scaleX(0.9738);-webkit-text-stroke:.3px #fff;text-shadow:0 1px 2px rgba(0,0,0,.95),0 0 3px rgba(0,0,0,.8),1px 1px 1.5px rgba(0,0,0,.75),0 0 1px rgba(0,0,0,.6);">HD Tune Pro</span>
<svg style="left:14px;top:620.5px;" width="50" height="50" viewBox="0 0 50 50"><circle cx="25" cy="25" r="23" fill="#fff"/><path d="M5.08 13.50 A23 23 0 0 1 44.92 13.50 L34.10 30.26 A10.511 10.511 0 0 0 25.00 14.49 Z" fill="#ea4335"/><path d="M44.92 13.50 A23 23 0 0 1 25.00 48.00 L15.90 30.26 A10.511 10.511 0 0 0 34.10 30.26 Z" fill="#fbc116"/><path d="M25.00 48.00 A23 23 0 0 1 5.08 13.50 L25.00 14.49 A10.511 10.511 0 0 0 15.90 30.26 Z" fill="#2fa24f"/><circle cx="25" cy="25" r="10.511" fill="#fff"/><circle cx="25" cy="25" r="8.51" fill="#4b84ee"/><g transform="translate(0.5 36.4)"><rect x="0" y="0" width="13.6" height="13.6" fill="#fdfdff"/><path d="M4.0 2.7 L10.4 2.4 L10.3 9.0 L8.3 7.0 C6.9 8.2 6.3 9.8 6.0 11.9 C3.3 10.6 2.5 7.4 5.6 4.4Z" fill="#27397a"/><path d="M5 3.2 L9.8 3 L9.8 6.4 C8 5.6 6.6 5.2 5.6 4.4Z" fill="#34509a" opacity=".8"/></g></svg>
<span class="t" style="left:17.61px;top:677.00px;font-size:12.6px;color:#fff;transform:scaleX(1.0483);-webkit-text-stroke:.3px #fff;text-shadow:0 1px 2px rgba(0,0,0,.95),0 0 3px rgba(0,0,0,.8),1px 1px 1.5px rgba(0,0,0,.75),0 0 1px rgba(0,0,0,.6);">Google</span>
<span class="t" style="left:16.81px;top:694.00px;font-size:12.6px;color:#fff;transform:scaleX(0.9908);-webkit-text-stroke:.3px #fff;text-shadow:0 1px 2px rgba(0,0,0,.95),0 0 3px rgba(0,0,0,.8),1px 1px 1.5px rgba(0,0,0,.75),0 0 1px rgba(0,0,0,.6);">Chrome</span>
<svg style="left:93px;top:620.5px;" width="50" height="50" viewBox="0 0 50 50"><defs><linearGradient id="fgchrome" x1="0" x2="1"><stop offset="0" stop-color="#fff0ba"/><stop offset=".12" stop-color="#fbe08f"/><stop offset="1" stop-color="#f7d577"/></linearGradient></defs><path d="M9.3 5.4 L34.4 5.4 L34.4 13 L17 13Z" fill="#f3c851"/><path d="M31.2 10 L41 10.8 L41 45.8 L31.2 44.6Z" fill="#fafbfd" stroke="#dfe5ee" stroke-width=".5"/><path d="M17.6 8.6 L31.8 11.2 L31.8 48.3 L17.6 43.2Z" fill="#fdfdfe" stroke="#e6dcdc" stroke-width=".5"/><g transform="translate(20.4 28.6) scale(.56 1)"><path d="M0 -14.6 A14.6 14.6 0 0 1 12.64 -7.3 L0 -7.3Z" fill="#e94335"/><path d="M12.64 -7.3 A14.6 14.6 0 0 1 0 14.6 L0 7 L6.2 -3.6 L5 -7.3Z" fill="#fbc116"/><path d="M0 14.6 L0 7 L3 5Z" fill="#2fa24f"/><path d="M0 14.6 A 14.6 14.6 0 0 1 -1.5 14.5 L0 6Z" fill="#2fa24f"/><path d="M0 -7.3 A7.3 7.3 0 0 1 0 7.3Z" fill="#fff"/><path d="M0 -5.6 A5.6 5.6 0 0 1 0 5.6Z" fill="#4b84ee"/></g><path d="M20.4 43 L23 44 L23 36Z" fill="#2fa24f"/><path d="M33.6 22 L38.4 22.384" stroke="#e4e2ea" stroke-width="0.8"/><path d="M33.6 25.6 L38.4 25.984" stroke="#e4e2ea" stroke-width="0.8"/><path d="M33.6 29.2 L38.4 29.584" stroke="#e4e2ea" stroke-width="0.8"/><path d="M33.6 32.8 L38.4 33.184" stroke="#e4e2ea" stroke-width="0.8"/><path d="M33.6 36.4 L38.4 36.784" stroke="#e4e2ea" stroke-width="0.8"/><path d="M33.6 40 L38.4 40.384" stroke="#e4e2ea" stroke-width="0.8"/><path d="M9.3 5.6 L18 8.8 L18 48 L9.3 42Z" fill="url(#fgchrome)"/><path d="M9.5 5.8 L9.5 42" stroke="#fff6d0" stroke-width=".7"/></svg>
<span class="t" style="left:100.31px;top:677.00px;font-size:12.6px;color:#fff;transform:scaleX(0.9720);-webkit-text-stroke:.3px #fff;text-shadow:0 1px 2px rgba(0,0,0,.95),0 0 3px rgba(0,0,0,.8),1px 1px 1.5px rgba(0,0,0,.75),0 0 1px rgba(0,0,0,.6);">Canon</span>
<svg style="left:14px;top:723px;" width="50" height="50" viewBox="0 0 50 50"><rect x="0.5" y="0.6" width="49.5" height="49.2" fill="#c00408"/><path d="M28.6 5.4 L15 28.6 L22.4 28.6 L22 44.8 L26.2 30 L31.6 26.6 L35.6 20.6 L29 21.6Z" fill="#fff"/><g transform="translate(37.2 38) scale(1.08)"><path d="M0 -11.5 C3.5 -9 7 -8.3 10.5 -8.3 C10.5 0 8 7 0 11.5 C-8 7 -10.5 0 -10.5 -8.3 C-7 -8.3 -3.5 -9 0 -11.5Z" fill="#fff" transform="scale(.935)"/><path d="M-0.7 -10.2 C-3.7 -8.2 -6.6 -7.5 -9.6 -7.4 C-9.6 -4.6 -9.3 -2.6 -8.8 -0.7 L-0.7 -0.7Z" fill="#1170d0"/><path d="M0.7 -10.2 C3.7 -8.2 6.6 -7.5 9.6 -7.4 C9.6 -4.6 9.3 -2.6 8.8 -0.7 L0.7 -0.7Z" fill="#f9b32a"/><path d="M-8.4 0.7 L-0.7 0.7 L-0.7 10 C-4.8 7.4 -7.2 4.3 -8.4 0.7Z" fill="#f9b32a"/><path d="M8.4 0.7 L0.7 0.7 L0.7 10 C4.8 7.4 7.2 4.3 8.4 0.7Z" fill="#1170d0"/></g><g transform="translate(0.5 36.4)"><rect x="0" y="0" width="13.6" height="13.6" fill="#fdfdff"/><path d="M4.0 2.7 L10.4 2.4 L10.3 9.0 L8.3 7.0 C6.9 8.2 6.3 9.8 6.0 11.9 C3.3 10.6 2.5 7.4 5.6 4.4Z" fill="#27397a"/><path d="M5 3.2 L9.8 3 L9.8 6.4 C8 5.6 6.6 5.2 5.6 4.4Z" fill="#34509a" opacity=".8"/></g></svg>
<span class="t" style="left:21.31px;top:780.00px;font-size:12.6px;color:#fff;transform:scaleX(0.9209);-webkit-text-stroke:.3px #fff;text-shadow:0 1px 2px rgba(0,0,0,.95),0 0 3px rgba(0,0,0,.8),1px 1px 1.5px rgba(0,0,0,.75),0 0 1px rgba(0,0,0,.6);">CPUID</span>
<span class="t" style="left:6.61px;top:796.00px;font-size:12.6px;color:#fff;transform:scaleX(1.0429);-webkit-text-stroke:.3px #fff;text-shadow:0 1px 2px rgba(0,0,0,.95),0 0 3px rgba(0,0,0,.8),1px 1px 1.5px rgba(0,0,0,.75),0 0 1px rgba(0,0,0,.6);">HWMonitor</span>
<svg style="left:93px;top:723px;" width="50" height="50" viewBox="0 0 50 50"><path d="M8.6 10.6 L8.6 36 L15.6 36 L15.6 38.2 L22.6 38.2 L22.6 40.4 L28.8 40.4 L35.4 40.4 L35.4 17 L29 17 L29 15 L22.4 15 L22.4 13 L15.8 13 L15.8 11.4 L8.6 11.4" fill="#fff" stroke="#0b1220" stroke-width="1.6"/><path d="M9.4 13.6 L15.8 13.6 L15.8 15.6 L22.4 15.6 L22.4 17.6 L29 17.6 L29 19.6 L34.6 19.6" stroke="#2fd0c4" stroke-width="1.6" fill="none"/><path d="M36.4 33 L44 36.6 L36.4 40.6Z" fill="#8d8d8d"/><path d="M8.6 9 L8.6 12" stroke="#0b1220" stroke-width="1.6"/><g transform="translate(0.5 36.4)"><rect x="0" y="0" width="13.6" height="13.6" fill="#fdfdff"/><path d="M4.0 2.7 L10.4 2.4 L10.3 9.0 L8.3 7.0 C6.9 8.2 6.3 9.8 6.0 11.9 C3.3 10.6 2.5 7.4 5.6 4.4Z" fill="#27397a"/><path d="M5 3.2 L9.8 3 L9.8 6.4 C8 5.6 6.6 5.2 5.6 4.4Z" fill="#34509a" opacity=".8"/></g></svg>
<span class="t" style="left:80.51px;top:780.00px;font-size:12.6px;color:#fff;transform:scaleX(0.9265);-webkit-text-stroke:.3px #fff;text-shadow:0 1px 2px rgba(0,0,0,.95),0 0 3px rgba(0,0,0,.8),1px 1px 1.5px rgba(0,0,0,.75),0 0 1px rgba(0,0,0,.6);">ServiceSupp...</span>
<svg style="left:1518.5px;top:723px;" width="50" height="50" viewBox="0 0 50 50"><defs><linearGradient id="rb" x1="0" x2="1"><stop offset="0" stop-color="#eef1f4"/><stop offset=".55" stop-color="#e6e9ee"/><stop offset=".56" stop-color="#d9dde4"/><stop offset="1" stop-color="#cfd4dd"/></linearGradient></defs><path d="M10.6 9 L16 4 L19 6.6 L23 1.6 L27.4 5 L30.6 2.8 L33.6 6.6 L40 8.6 L36 12 L12 12Z" fill="#f4f5f7"/><path d="M5.2 7.2 L27.6 10.6 L44.6 8.2 L39.8 41.4 L27 45.4 L9.6 39.8Z" fill="url(#rb)" opacity=".96"/><path d="M5.2 7.2 L27.6 10.6 L44.6 8.2" stroke="#c3c9d6" stroke-width=".8" fill="none"/><path d="M27.6 10.6 L27 45.4" stroke="#f4f6f8" stroke-width=".7"/><g fill="none" stroke="#1583d8" stroke-width="3.100" stroke-linejoin="round"><path d="M13.600 22.200 L16.400 19.600 L20 20.400 L22 23.800"/><path d="M11.400 24.800 L10.800 28.600 L13.600 31.400"/><path d="M17.200 33.600 L21.400 32.800 L23.600 29"/></g><path d="M20 26 L24.400 25.400 L23 21.400Z M15.600 32 L12.400 34.600 L17 35.800Z M9.400 26.400 L13.600 24.200 L9.600 22.600Z" fill="#1583d8"/></svg>
<span class="t" style="left:1524.31px;top:780.00px;font-size:12.6px;color:#fff;transform:scaleX(1.0229);-webkit-text-stroke:.3px #fff;text-shadow:0 1px 2px rgba(0,0,0,.95),0 0 3px rgba(0,0,0,.8),1px 1px 1.5px rgba(0,0,0,.75),0 0 1px rgba(0,0,0,.6);">Кошче</span>
<!-- p_paint -->
<div style="left:166.6px;top:90px;width:1265.2px;height:711.8px;background:#fff;box-shadow:0 0 1px rgba(0,0,30,.5),0 2px 9px rgba(0,0,40,.22);"></div>
<svg style="left:172px;top:96px;" width="20" height="18" viewBox="0 0 20 18"><ellipse cx="8.4" cy="10.4" rx="7.6" ry="5.8" fill="#cfe0f4" stroke="#7f9cc8" stroke-width="1" transform="rotate(-12 8.4 10.4)"/><circle cx="4.6" cy="10.6" r="1.5" fill="#d6483b"/><circle cx="7.6" cy="7.4" r="1.5" fill="#5aa845"/><circle cx="11.2" cy="7.6" r="1.4" fill="#e3b63a"/><circle cx="6.4" cy="13.4" r="1.5" fill="#4a7fd0"/><path d="M16.6 1.4 L18 2.6 L11.6 13.2 L9.4 14.6 L9.8 12Z" fill="#e08e2c" stroke="#a86a28" stroke-width=".4"/><path d="M9.8 12 L11.6 13.2 L9 15.4Z" fill="#5b4a3a"/></svg>
<div style="left:195.3px;top:98.5px;width:1px;height:13.5px;background:#c8c8c8;"></div>
<svg style="left:207.8px;top:99.8px;" width="12.9" height="12.4" viewBox="0 0 14.4 14"><path d="M0.6 0.6 L13.8 0.6 L13.8 13.4 L0.6 13.4Z" fill="#7c56b8" stroke="#5a3d96" stroke-width=".8"/><rect x="3" y="0.8" width="8.4" height="6.4" fill="#efeaf7"/><rect x="3.6" y="9" width="7.2" height="4.2" fill="#4c3585"/><rect x="7.6" y="9.8" width="1.8" height="2.6" fill="#e6def4"/></svg>
<svg style="left:228.8px;top:97.8px;" width="14.2" height="15" viewBox="0 0 15.5 16"><path d="M0.8 1 L1.2 8 L7.8 6.8 L5.6 5 C9 3.6 12.6 6.6 10.6 11 C9.8 12.6 8.6 13.6 7.6 14.4 L9.6 15.4 C13.6 12.8 15.8 8.6 13.6 4.8 C11.4 1 6.8 0.6 3.6 3.2Z" fill="#2088e0" stroke="#1a6fc0" stroke-width=".5"/></svg>
<svg style="left:250.8px;top:97.8px;" width="14.2" height="15" viewBox="0 0 15.5 16"><path d="M14.7 1 L14.3 8 L7.7 6.8 L9.9 5 C6.5 3.6 2.9 6.6 4.9 11 C5.7 12.6 6.9 13.6 7.9 14.4 L5.9 15.4 C1.9 12.8 -0.3 8.6 1.9 4.8 C4.1 1 8.700 0.6 11.9 3.2Z" fill="#9fb6cf" stroke="#8aa3bf" stroke-width=".5"/></svg>
<svg style="left:272px;top:103.4px;" width="7" height="7" viewBox="0 0 8 8"><rect x="0.6" y="0.6" width="6.6" height="1.1" fill="#222"/><path d="M0.6 3.2 L7.2 3.2 L3.9 6.6Z" fill="#222"/></svg>
<div style="left:289.2px;top:98.5px;width:1px;height:13.5px;background:#c8c8c8;"></div>
<span class="t" style="left:295.52px;top:100.00px;font-size:12.4px;color:#9c9c9c;-webkit-text-stroke:.12px #9c9c9c;">Без име - Paint</span>
<svg style="left:1300px;top:95px;" width="120" height="20" viewBox="0 0 120 20"><path d="M3.6 9.4 L13.8 9.4" stroke="#8b8b8b" stroke-width="1"/><rect x="52.6" y="4.6" width="9.6" height="9.6" fill="none" stroke="#8b8b8b" stroke-width="1"/><path d="M102 4.4 L112 14.4 M112 4.4 L102 14.4" stroke="#8b8b8b" stroke-width="1"/></svg>
<div style="left:166.6px;top:120.6px;width:58.6px;height:23.4px;background:#1979ca;"></div>
<span class="t" style="left:183.13px;top:128.00px;font-size:12.2px;color:#fff;transform:scaleX(0.8590);-webkit-text-stroke:.28px #fff;">Файл</span>
<div style="left:225.2px;top:121.2px;width:65.6px;height:23px;background:#f5f6f7;border:1px solid #dadbdc;border-bottom:none;"></div>
<span class="t" style="left:238.93px;top:128.00px;font-size:12.2px;color:#454545;transform:scaleX(0.8934);-webkit-text-stroke:.28px #454545;">Начало</span>
<span class="t" style="left:305.33px;top:128.00px;font-size:12.2px;color:#454545;transform:scaleX(0.9154);-webkit-text-stroke:.28px #454545;">Изглед</span>
<svg style="left:1391px;top:124px;" width="40" height="18" viewBox="0 0 40 18"><path d="M2.6 11.4 L7.6 6.4 L12.6 11.4" stroke="#8a8a8a" stroke-width="1.2" fill="none"/><circle cx="29.4" cy="8.6" r="8" fill="#1a66c4"/><circle cx="29.4" cy="8.6" r="7.2" fill="#1e74d4"/><path d="M26.6 6.6 C26.6 2.6 32.6 2.6 32.6 6.2 C32.6 8.4 29.6 8.6 29.6 10.8" stroke="#fff" stroke-width="1.7" fill="none"/><circle cx="29.6" cy="13.2" r="1.05" fill="#fff"/></svg>
<div style="left:166.6px;top:143.6px;width:1265.2px;height:95.2px;background:#f5f6f7;border-top:1px solid #dadbdc;border-bottom:1px solid #d3d6db;"></div>
<div style="left:950px;top:155.2px;width:31.8px;height:24.6px;background:#fff;border:1px solid #9b9b9b;"></div>
<span class="t" style="left:954.83px;top:188.00px;font-size:12.2px;color:#454545;transform:scaleX(0.9780);-webkit-text-stroke:.28px #454545;">Цвят</span>
<span class="t" style="left:965.63px;top:203.00px;font-size:12.2px;color:#454545;transform:scaleX(0.9942);-webkit-text-stroke:.28px #454545;">2</span>
<div style="left:991px;top:149.3px;width:20.6px;height:20.6px;background:#000000;border:1px solid #b9bdc2;box-shadow:inset 0 0 0 1px #fbfbfb;"></div>
<div style="left:1013.7px;top:149.3px;width:20.6px;height:20.6px;background:#7f7f7f;border:1px solid #b9bdc2;box-shadow:inset 0 0 0 1px #fbfbfb;"></div>
<div style="left:1036.4px;top:149.3px;width:20.6px;height:20.6px;background:#880015;border:1px solid #b9bdc2;box-shadow:inset 0 0 0 1px #fbfbfb;"></div>
<div style="left:1059.1px;top:149.3px;width:20.6px;height:20.6px;background:#ed1c24;border:1px solid #b9bdc2;box-shadow:inset 0 0 0 1px #fbfbfb;"></div>
<div style="left:1081.8px;top:149.3px;width:20.6px;height:20.6px;background:#ff7f27;border:1px solid #b9bdc2;box-shadow:inset 0 0 0 1px #fbfbfb;"></div>
<div style="left:1104.5px;top:149.3px;width:20.6px;height:20.6px;background:#fff200;border:1px solid #b9bdc2;box-shadow:inset 0 0 0 1px #fbfbfb;"></div>
<div style="left:1127.2px;top:149.3px;width:20.6px;height:20.6px;background:#22b14c;border:1px solid #b9bdc2;box-shadow:inset 0 0 0 1px #fbfbfb;"></div>
<div style="left:1149.9px;top:149.3px;width:20.6px;height:20.6px;background:#00a2e8;border:1px solid #b9bdc2;box-shadow:inset 0 0 0 1px #fbfbfb;"></div>
<div style="left:1172.6px;top:149.3px;width:20.6px;height:20.6px;background:#3f48cc;border:1px solid #b9bdc2;box-shadow:inset 0 0 0 1px #fbfbfb;"></div>
<div style="left:1195.3px;top:149.3px;width:20.6px;height:20.6px;background:#a349a4;border:1px solid #b9bdc2;box-shadow:inset 0 0 0 1px #fbfbfb;"></div>
<div style="left:991px;top:171.9px;width:20.6px;height:20.6px;background:#ffffff;border:1px solid #b9bdc2;box-shadow:inset 0 0 0 1px #fbfbfb;"></div>
<div style="left:1013.7px;top:171.9px;width:20.6px;height:20.6px;background:#c3c3c3;border:1px solid #b9bdc2;box-shadow:inset 0 0 0 1px #fbfbfb;"></div>
<div style="left:1036.4px;top:171.9px;width:20.6px;height:20.6px;background:#b97a57;border:1px solid #b9bdc2;box-shadow:inset 0 0 0 1px #fbfbfb;"></div>
<div style="left:1059.1px;top:171.9px;width:20.6px;height:20.6px;background:#ffaec9;border:1px solid #b9bdc2;box-shadow:inset 0 0 0 1px #fbfbfb;"></div>
<div style="left:1081.8px;top:171.9px;width:20.6px;height:20.6px;background:#ffc90e;border:1px solid #b9bdc2;box-shadow:inset 0 0 0 1px #fbfbfb;"></div>
<div style="left:1104.5px;top:171.9px;width:20.6px;height:20.6px;background:#efe4b0;border:1px solid #b9bdc2;box-shadow:inset 0 0 0 1px #fbfbfb;"></div>
<div style="left:1127.2px;top:171.9px;width:20.6px;height:20.6px;background:#b5e61d;border:1px solid #b9bdc2;box-shadow:inset 0 0 0 1px #fbfbfb;"></div>
<div style="left:1149.9px;top:171.9px;width:20.6px;height:20.6px;background:#99d9ea;border:1px solid #b9bdc2;box-shadow:inset 0 0 0 1px #fbfbfb;"></div>
<div style="left:1172.6px;top:171.9px;width:20.6px;height:20.6px;background:#7092be;border:1px solid #b9bdc2;box-shadow:inset 0 0 0 1px #fbfbfb;"></div>
<div style="left:1195.3px;top:171.9px;width:20.6px;height:20.6px;background:#c8bfe7;border:1px solid #b9bdc2;box-shadow:inset 0 0 0 1px #fbfbfb;"></div>
<div style="left:991px;top:194.5px;width:20.6px;height:21.2px;background:#f7f8f9;border:1px solid #c3c6ca;"></div>
<div style="left:1013.7px;top:194.5px;width:20.6px;height:21.2px;background:#f7f8f9;border:1px solid #c3c6ca;"></div>
<div style="left:1036.4px;top:194.5px;width:20.6px;height:21.2px;background:#f7f8f9;border:1px solid #c3c6ca;"></div>
<div style="left:1059.1px;top:194.5px;width:20.6px;height:21.2px;background:#f7f8f9;border:1px solid #c3c6ca;"></div>
<div style="left:1081.8px;top:194.5px;width:20.6px;height:21.2px;background:#f7f8f9;border:1px solid #c3c6ca;"></div>
<div style="left:1104.5px;top:194.5px;width:20.6px;height:21.2px;background:#f7f8f9;border:1px solid #c3c6ca;"></div>
<div style="left:1127.2px;top:194.5px;width:20.6px;height:21.2px;background:#f7f8f9;border:1px solid #c3c6ca;"></div>
<div style="left:1149.9px;top:194.5px;width:20.6px;height:21.2px;background:#f7f8f9;border:1px solid #c3c6ca;"></div>
<div style="left:1172.6px;top:194.5px;width:20.6px;height:21.2px;background:#f7f8f9;border:1px solid #c3c6ca;"></div>
<div style="left:1195.3px;top:194.5px;width:20.6px;height:21.2px;background:#f7f8f9;border:1px solid #c3c6ca;"></div>
<svg style="left:1235px;top:151px;" width="31" height="31" viewBox="0 0 31 31"><defs><linearGradient id="rbw" x1="0" x2="1"><stop offset="0" stop-color="#f03030"/><stop offset=".2" stop-color="#f5e52a"/><stop offset=".4" stop-color="#30d040"/><stop offset=".6" stop-color="#28c8e8"/><stop offset=".8" stop-color="#3a48e0"/><stop offset="1" stop-color="#e030c8"/></linearGradient><linearGradient id="rbk" x1="0" y1="0" x2="0" y2="1"><stop offset="0" stop-color="#000" stop-opacity="0"/><stop offset=".45" stop-color="#555" stop-opacity=".1"/><stop offset="1" stop-color="#4a4a4a" stop-opacity=".95"/></linearGradient></defs><rect x=".5" y=".5" width="30" height="30" fill="#fff" stroke="#b8b8b8"/><rect x="2.2" y="2.2" width="26.6" height="26.6" fill="url(#rbw)"/><rect x="2.2" y="2.2" width="26.6" height="26.6" fill="url(#rbk)"/></svg>
<span class="t" style="left:1218.93px;top:188.00px;font-size:12.2px;color:#454545;transform:scaleX(0.8631);-webkit-text-stroke:.28px #454545;">Редактиране</span>
<span class="t" style="left:1222.13px;top:203.00px;font-size:12.2px;color:#454545;transform:scaleX(0.9064);-webkit-text-stroke:.28px #454545;">на цветове</span>
<div style="left:1290px;top:148px;width:1px;height:88px;background:#e2e3e4;"></div>
<svg style="left:1311.6px;top:151px;" width="31.4" height="31" viewBox="0 0 31.4 31"><defs><linearGradient id="p3" x1="0" y1="0" x2="1" y2="1"><stop offset="0" stop-color="#3aa0f0"/><stop offset=".4" stop-color="#a050e0"/><stop offset=".75" stop-color="#f04060"/><stop offset="1" stop-color="#f8a030"/></linearGradient></defs><rect x=".5" y=".5" width="30.4" height="30" fill="#fdfdfd" stroke="#cfcfcf"/><path d="M15.6 5 C21 5 25 9 25 13.6 C25 18.6 21 21 18.4 23.4 C17 24.8 17.4 26.8 15.6 26.8 C13.6 26.8 13 25 13.6 23 C14 21.4 12.6 20.6 10.6 19.6 C7.6 18 6.4 15.6 6.4 13.4 C6.4 8.6 10.6 5 15.6 5Z" fill="url(#p3)"/><ellipse cx="13.4" cy="10" rx="4" ry="2.6" fill="#4ac0f8" opacity=".8"/></svg>
<span class="t" style="left:1295.33px;top:188.00px;font-size:12.2px;color:#454545;transform:scaleX(0.8686);-webkit-text-stroke:.28px #454545;">Редактиране</span>
<span class="t" style="left:1302.33px;top:203.00px;font-size:12.2px;color:#454545;transform:scaleX(0.8668);-webkit-text-stroke:.28px #454545;">с Paint 3D</span>
<div style="left:1366.4px;top:148px;width:1px;height:88px;background:#e2e3e4;"></div>
<span class="t" style="left:1074.03px;top:223.00px;font-size:12.2px;color:#5f6368;transform:scaleX(0.9164);-webkit-text-stroke:.28px #5f6368;">Цветове</span>
<div style="left:166.6px;top:238.8px;width:1265.2px;height:536.6px;background:linear-gradient(to bottom,#c5cfe0 0,#c9d3e3 2%,#dde5f2 100%);"></div>
<div style="left:170.8px;top:243px;width:960.2px;height:532.4px;background:#fff;box-shadow:3px 0 4px rgba(95,110,150,.6),1px 0 1px rgba(95,110,150,.5);"></div>
<div style="left:1130.2px;top:511.2px;width:4.6px;height:4.6px;background:#fff;border:1px solid #555;"></div>
<div style="left:1413.4px;top:238.8px;width:18.4px;height:536.6px;background:#f0f0f0;border-left:1px solid #fafbfd;"></div>
<div style="left:1414.2px;top:257.4px;width:17.6px;height:487.4px;background:#cdcdcd;"></div>
<svg style="left:1414.2px;top:240px;" width="17.6" height="16" viewBox="0 0 17.6 16"><path d="M4.6 10.4 L8.8 6.2 L13 10.4" stroke="#404040" stroke-width="1.6" fill="none"/></svg>
<svg style="left:1414.2px;top:757px;" width="17.6" height="16" viewBox="0 0 17.6 16"><path d="M4.6 6 L8.8 10.2 L13 6" stroke="#404040" stroke-width="1.6" fill="none"/></svg>
<div style="left:166.6px;top:775.4px;width:1265.2px;height:25.8px;background:#f0f0f0;border-top:1px solid #d7d7d7;"></div>
<div style="left:332.8px;top:777px;width:1px;height:23px;background:#dcdcdc;box-shadow:1px 0 0 #fafafa;"></div>
<div style="left:499.2px;top:777px;width:1px;height:23px;background:#dcdcdc;box-shadow:1px 0 0 #fafafa;"></div>
<div style="left:666.2px;top:777px;width:1px;height:23px;background:#dcdcdc;box-shadow:1px 0 0 #fafafa;"></div>
<div style="left:832.6px;top:777px;width:1px;height:23px;background:#dcdcdc;box-shadow:1px 0 0 #fafafa;"></div>
<div style="left:1208.4px;top:777px;width:1px;height:23px;background:#dcdcdc;box-shadow:1px 0 0 #fafafa;"></div>
<svg style="left:168.8px;top:781px;" width="15" height="15" viewBox="0 0 15 15"><path d="M7.5 1.6 L7.5 13.4 M1.6 7.5 L13.4 7.5" stroke="#3a3a3a" stroke-width="1"/><path d="M7.5 0.4 L9.3 2.8 L5.7 2.8Z M7.5 14.6 L9.3 12.2 L5.700 12.2Z M0.4 7.5 L2.8 5.7 L2.8 9.3Z M14.6 7.5 L12.2 5.7 L12.2 9.3Z" fill="#3a3a3a"/></svg>
<svg style="left:336.6px;top:781px;" width="17" height="15" viewBox="0 0 17 15"><rect x="2.4" y="1.8" width="13" height="10.4" fill="#f8f8f8" stroke="#6a6a6a" stroke-width="1"/><path d="M1 0.6 L1 13.6 L14 13.6" stroke="#6a6a6a" stroke-width=".9" fill="none" stroke-dasharray="1.4 1.2"/></svg>
<svg style="left:503.6px;top:780.6px;" width="16" height="15" viewBox="0 0 16 15"><defs><linearGradient id="szg" x1="0" y1="0" x2="1" y2="1"><stop offset="0" stop-color="#cfdcec"/><stop offset="1" stop-color="#fbfdff"/></linearGradient></defs><rect x="2.400" y="1.600" width="12" height="10.800" fill="url(#szg)" stroke="#59616c" stroke-width="1"/><path d="M0.900 2.400 L0.900 11.600 M3.400 14 L14.200 14" stroke="#4a525c" stroke-width=".9" fill="none"/><path d="M0.900 1.400 L1.600 2.800 L0.200 2.800Z M0.900 12.600 L1.600 11.200 L0.200 11.200Z M2.400 14 L3.800 13.300 L3.800 14.700Z M15.200 14 L13.800 13.300 L13.800 14.700Z" fill="#4a525c"/></svg>
<span class="t" style="left:523.12px;top:784.00px;font-size:12.4px;color:#222;transform:scaleX(1.0139);-webkit-text-stroke:.28px #222;">1152 × 648px</span>
<span class="t" style="left:1228.32px;top:784.00px;font-size:12.4px;color:#222;transform:scaleX(0.9515);-webkit-text-stroke:.28px #222;">100%</span>
<svg style="left:1263px;top:778px;" width="150" height="22" viewBox="0 0 150 22"><defs><linearGradient id="zb" x1="0" y1="0" x2="0" y2="1"><stop offset="0" stop-color="#fdfdfd"/><stop offset="1" stop-color="#dcdcdc"/></linearGradient></defs><circle cx="10.4" cy="10.4" r="7.9" fill="url(#zb)" stroke="#8e8e8e" stroke-width="1"/><path d="M6.4 10.4 L14.4 10.4" stroke="#444" stroke-width="1.5"/><rect x="30" y="9.2" width="87.6" height="2.4" fill="#e6e6e6" stroke="#d0d0d0" stroke-width=".6"/><path d="M68.2 1.2 L78.8 1.2 L78.8 15 L73.5 20.4 L68.2 15Z" fill="#0a74da"/><circle cx="137" cy="10.4" r="7.9" fill="url(#zb)" stroke="#8e8e8e" stroke-width="1"/><path d="M133 10.4 L141 10.4 M137 6.4 L137 14.4" stroke="#444" stroke-width="1.5"/></svg>
<svg style="left:1421.4px;top:790.6px;" width="10" height="10" viewBox="0 0 10 10"><rect x="7" y="1" width="1.7" height="1.7" fill="#b5b5b5"/><rect x="4" y="4" width="1.7" height="1.7" fill="#b5b5b5"/><rect x="7" y="4" width="1.7" height="1.7" fill="#b5b5b5"/><rect x="1" y="7" width="1.7" height="1.7" fill="#b5b5b5"/><rect x="4" y="7" width="1.7" height="1.7" fill="#b5b5b5"/><rect x="7" y="7" width="1.7" height="1.7" fill="#b5b5b5"/></svg>
<!-- p_ecu -->
<div style="left:144.2px;top:136.4px;width:817.2px;height:606.8px;background:#f0f0f0;box-shadow:0 0 1px rgba(0,0,0,.6),0 3px 14px rgba(0,0,20,.26),0 1px 4px rgba(0,0,20,.14);"></div>
<div style="left:144.2px;top:136.4px;width:817.2px;height:31.6px;background:#fff;"></div>
<svg style="left:154px;top:146px;" width="13" height="11" viewBox="0 0 13 11"><path d="M1.4 9.6 L7 4 L9 6 L3.4 10.4Z" fill="#f08a80"/><path d="M7 3.4 L10.6 1 L12 2.6 L9.4 6Z" fill="#f3a49c"/><path d="M0.6 10.6 L2.4 9 " stroke="#e9a9a2" stroke-width="1"/></svg>
<span class="t" style="left:172.92px;top:147.00px;font-size:12.4px;color:#a0a0a0;transform:scaleX(0.9508);-webkit-text-stroke:.12px #a0a0a0;">IAW ECU Scan (ISO-KKL Interface)</span>
<svg style="left:826px;top:143px;" width="125" height="20" viewBox="0 0 125 20"><path d="M7.4 9.4 L17.6 9.4" stroke="#9a9a9a" stroke-width="1"/><rect x="55.8" y="4.8" width="9.6" height="9.6" fill="none" stroke="#9a9a9a" stroke-width="1"/><path d="M105 4.4 L115 14.4 M115 4.4 L105 14.400" stroke="#8a8a8a" stroke-width="1"/></svg>
<div style="left:144.2px;top:168px;width:817.2px;height:25.4px;background:#fbfbfb;"></div>
<div style="left:150.3px;top:170.2px;width:111.5px;height:20.8px;background:#cce4f7;border:1px solid #4a96dd;"></div>
<span class="t" style="left:159.31px;top:175.00px;font-size:12.6px;color:#14191f;transform:scaleX(0.9829);-webkit-text-stroke:.28px #14191f;">[F10] Disconnect</span>
<span class="t" style="left:270.31px;top:175.00px;font-size:12.6px;color:#a2a2a2;transform:scaleX(1.0074);-webkit-text-stroke:.15px #a2a2a2;">Initial Settings</span>
<span class="t" style="left:367.61px;top:175.00px;font-size:12.6px;color:#1c1c1c;transform:scaleX(0.9465);-webkit-text-stroke:.28px #1c1c1c;">Graph Rerfesh</span>
<span class="t" style="left:464.71px;top:175.00px;font-size:12.6px;color:#1c1c1c;transform:scaleX(1.0314);-webkit-text-stroke:.28px #1c1c1c;">About...</span>
<div style="left:148px;top:217.2px;width:807.4px;height:456px;background:#fff;border:1px solid #d9d9d9;"></div>
<div style="left:240.2px;top:199.6px;width:61.2px;height:18.2px;background:#f0f0f0;border:1px solid #d9d9d9;"></div>
<span class="t" style="left:244.84px;top:203.00px;font-size:12px;color:#222;transform:scaleX(0.8862);-webkit-text-stroke:.28px #222;">[F3] Errors</span>
<div style="left:300.4px;top:199.6px;width:63.2px;height:18.2px;background:#f0f0f0;border:1px solid #d9d9d9;"></div>
<span class="t" style="left:307.34px;top:203.00px;font-size:12px;color:#222;transform:scaleX(0.9483);-webkit-text-stroke:.28px #222;">[F4] Tests</span>
<div style="left:362.6px;top:199.6px;width:70.6px;height:18.2px;background:#f0f0f0;border:1px solid #d9d9d9;"></div>
<span class="t" style="left:368.34px;top:203.00px;font-size:12px;color:#222;transform:scaleX(0.9173);-webkit-text-stroke:.28px #222;">[F5] Graphs</span>
<div style="left:432.2px;top:199.6px;width:72.4px;height:18.2px;background:#f0f0f0;border:1px solid #d9d9d9;"></div>
<span class="t" style="left:438.54px;top:203.00px;font-size:12px;color:#222;transform:scaleX(0.9163);-webkit-text-stroke:.28px #222;">[F6] Gauges</span>
<div style="left:148px;top:197px;width:92.8px;height:21.4px;background:#fff;border:1px solid #d9d9d9;border-bottom:none;"></div>
<span class="t" style="left:155.34px;top:201.00px;font-size:12px;color:#222;transform:scaleX(0.8987);-webkit-text-stroke:.28px #222;">[F2] Parameters</span>
<span class="t" style="left:183.37px;top:227.00px;font-size:16.9px;color:#0a0a0a;font-weight:700;transform:scaleX(1.0553);">Engine Speed</span>
<span class="t" style="left:397.67px;top:227.00px;font-size:16.9px;color:#0a0a0a;font-weight:700;transform:scaleX(1.0759);">0935rpm</span>
<svg style="left:156.35px;top:227.4px;" width="16" height="16" viewBox="0 0 16 16"><circle cx="8" cy="8" r="6.15" fill="#fff" stroke="#4a4a4a" stroke-width="1.3"/><circle cx="8" cy="8" r="3.45" fill="#2c2c2c"/></svg>
<span class="t" style="left:183.52px;top:247.00px;font-size:14.1px;color:#0a0a0a;font-weight:700;transform:scaleX(1.1407);">Desired Engine Speed</span>
<span class="t" style="left:397.82px;top:247.00px;font-size:14.1px;color:#0a0a0a;font-weight:700;transform:scaleX(1.1546);">0992rpm</span>
<span class="t" style="left:183.52px;top:264.00px;font-size:14.1px;color:#0a0a0a;font-weight:700;transform:scaleX(1.1424);">Engine Speed Offset</span>
<span class="t" style="left:397.82px;top:264.00px;font-size:14.1px;color:#0a0a0a;font-weight:700;transform:scaleX(1.1546);">0000rpm</span>
<span class="t" style="left:183.37px;top:282.00px;font-size:16.9px;color:#0a0a0a;font-weight:700;transform:scaleX(1.0326);">Injection Time</span>
<span class="t" style="left:397.67px;top:282.00px;font-size:16.9px;color:#0a0a0a;font-weight:700;transform:scaleX(1.0835);">00,53ms</span>
<svg style="left:156.35px;top:282.6px;" width="16" height="16" viewBox="0 0 16 16"><circle cx="8" cy="8" r="6.15" fill="#fff" stroke="#4a4a4a" stroke-width="1.3"/></svg>
<span class="t" style="left:183.37px;top:303.00px;font-size:16.9px;color:#0a0a0a;font-weight:700;transform:scaleX(1.0303);">Ignition Advance</span>
<span class="t" style="left:397.67px;top:303.00px;font-size:16.9px;color:#0a0a0a;font-weight:700;transform:scaleX(1.1168);">35,00°</span>
<svg style="left:156.35px;top:303.5px;" width="16" height="16" viewBox="0 0 16 16"><circle cx="8" cy="8" r="6.15" fill="#fff" stroke="#4a4a4a" stroke-width="1.3"/></svg>
<span class="t" style="left:183.37px;top:323.00px;font-size:16.9px;color:#0a0a0a;font-weight:700;transform:scaleX(1.0270);">MAP</span>
<span class="t" style="left:397.67px;top:323.00px;font-size:16.9px;color:#0a0a0a;font-weight:700;transform:scaleX(1.0977);">0406hPa</span>
<svg style="left:156.35px;top:324.2px;" width="16" height="16" viewBox="0 0 16 16"><circle cx="8" cy="8" r="6.15" fill="#fff" stroke="#4a4a4a" stroke-width="1.3"/></svg>
<span class="t" style="left:183.37px;top:344.00px;font-size:16.9px;color:#0a0a0a;font-weight:700;transform:scaleX(1.0412);">Air Temperature</span>
<span class="t" style="left:397.67px;top:344.00px;font-size:16.9px;color:#0a0a0a;font-weight:700;transform:scaleX(1.0930);">42°C</span>
<svg style="left:156.35px;top:345px;" width="16" height="16" viewBox="0 0 16 16"><circle cx="8" cy="8" r="6.15" fill="#fff" stroke="#4a4a4a" stroke-width="1.3"/></svg>
<span class="t" style="left:183.37px;top:365.00px;font-size:16.9px;color:#0a0a0a;font-weight:700;transform:scaleX(1.0493);">Engine Temperature</span>
<span class="t" style="left:397.67px;top:365.00px;font-size:16.9px;color:#0a0a0a;font-weight:700;transform:scaleX(1.0930);">59°C</span>
<svg style="left:156.35px;top:365.7px;" width="16" height="16" viewBox="0 0 16 16"><circle cx="8" cy="8" r="6.15" fill="#fff" stroke="#4a4a4a" stroke-width="1.3"/></svg>
<span class="t" style="left:183.37px;top:386.00px;font-size:16.9px;color:#0a0a0a;font-weight:700;transform:scaleX(1.0369);">Throttle Angle</span>
<span class="t" style="left:397.67px;top:386.00px;font-size:16.9px;color:#0a0a0a;font-weight:700;transform:scaleX(1.1168);">15,64°</span>
<svg style="left:156.35px;top:386.5px;" width="16" height="16" viewBox="0 0 16 16"><circle cx="8" cy="8" r="6.15" fill="#fff" stroke="#4a4a4a" stroke-width="1.3"/></svg>
<span class="t" style="left:183.37px;top:407.00px;font-size:16.9px;color:#0a0a0a;font-weight:700;transform:scaleX(1.0402);">ECU Supply</span>
<span class="t" style="left:397.67px;top:407.00px;font-size:16.9px;color:#0a0a0a;font-weight:700;transform:scaleX(1.1440);">14,26V</span>
<svg style="left:156.35px;top:407.2px;" width="16" height="16" viewBox="0 0 16 16"><circle cx="8" cy="8" r="6.15" fill="#fff" stroke="#4a4a4a" stroke-width="1.3"/></svg>
<span class="t" style="left:183.37px;top:427.00px;font-size:16.9px;color:#0a0a0a;font-weight:700;transform:scaleX(1.0496);">Calculated λ Factor</span>
<span class="t" style="left:397.67px;top:427.00px;font-size:16.9px;color:#0a0a0a;font-weight:700;transform:scaleX(1.1638);">0,79</span>
<svg style="left:156.35px;top:428px;" width="16" height="16" viewBox="0 0 16 16"><circle cx="8" cy="8" r="6.15" fill="#fff" stroke="#4a4a4a" stroke-width="1.3"/></svg>
<span class="t" style="left:183.37px;top:448.00px;font-size:16.9px;color:#0a0a0a;font-weight:700;transform:scaleX(1.0544);">IAV Position</span>
<span class="t" style="left:397.67px;top:448.00px;font-size:16.9px;color:#0a0a0a;font-weight:700;transform:scaleX(1.0984);">65 steps</span>
<svg style="left:156.35px;top:448.7px;" width="16" height="16" viewBox="0 0 16 16"><circle cx="8" cy="8" r="6.15" fill="#fff" stroke="#4a4a4a" stroke-width="1.3"/></svg>
<span class="t" style="left:183.52px;top:466.00px;font-size:14.1px;color:#0a0a0a;font-weight:700;transform:scaleX(1.1304);">IAV Correction Delta</span>
<span class="t" style="left:397.82px;top:466.00px;font-size:14.1px;color:#0a0a0a;font-weight:700;transform:scaleX(1.1689);">00 steps</span>
<span class="t" style="left:183.37px;top:482.00px;font-size:16.9px;color:#0a0a0a;font-weight:700;transform:scaleX(1.0832);">IAV Integral Gain</span>
<span class="t" style="left:397.67px;top:482.00px;font-size:16.9px;color:#0a0a0a;font-weight:700;transform:scaleX(1.1842);">03</span>
<svg style="left:156.35px;top:482.3px;" width="16" height="16" viewBox="0 0 16 16"><circle cx="8" cy="8" r="6.15" fill="#fff" stroke="#4a4a4a" stroke-width="1.3"/></svg>
<span class="t" style="left:183.37px;top:502.00px;font-size:16.9px;color:#0a0a0a;font-weight:700;transform:scaleX(1.0478);">IAV Proportional Gain</span>
<span class="t" style="left:397.67px;top:502.00px;font-size:16.9px;color:#0a0a0a;font-weight:700;transform:scaleX(1.1571);">-17</span>
<svg style="left:156.35px;top:503.1px;" width="16" height="16" viewBox="0 0 16 16"><circle cx="8" cy="8" r="6.15" fill="#fff" stroke="#4a4a4a" stroke-width="1.3"/></svg>
<span class="t" style="left:183.37px;top:523.00px;font-size:16.9px;color:#0a0a0a;font-weight:700;transform:scaleX(1.0328);">Fuel Trim</span>
<span class="t" style="left:397.67px;top:523.00px;font-size:16.9px;color:#0a0a0a;font-weight:700;transform:scaleX(1.1799);">000</span>
<svg style="left:156.35px;top:523.9px;" width="16" height="16" viewBox="0 0 16 16"><circle cx="8" cy="8" r="6.15" fill="#fff" stroke="#4a4a4a" stroke-width="1.3"/></svg>
<svg style="left:489.3px;top:223.2px;" width="458.1" height="286.6" viewBox="0 0 458.1 286.6"><defs><linearGradient id="gg" x1="0" y1="0" x2="0" y2="1"><stop offset="0" stop-color="#9bce32"/><stop offset="1" stop-color="#566c2f"/></linearGradient></defs><rect x="0" y="0" width="458.1" height="286.6" fill="url(#gg)"/><path d="M8.93 0V286.6M25.60 0V286.6M42.27 0V286.6M58.93 0V286.6M75.60 0V286.6M92.27 0V286.6M108.93 0V286.6M125.60 0V286.6M142.27 0V286.6M158.93 0V286.6M175.60 0V286.6M192.27 0V286.6M208.93 0V286.6M225.60 0V286.6M242.27 0V286.6M258.93 0V286.6M275.60 0V286.6M292.27 0V286.6M308.93 0V286.6M325.60 0V286.6M342.27 0V286.6M358.93 0V286.6M375.60 0V286.6M392.27 0V286.6M408.93 0V286.6M425.60 0V286.6M442.27 0V286.6M0 16.53H458.1M0 33.20H458.1M0 49.87H458.1M0 66.53H458.1M0 83.20H458.1M0 99.87H458.1M0 116.53H458.1M0 133.20H458.1M0 149.87H458.1M0 166.53H458.1M0 183.20H458.1M0 199.87H458.1M0 216.53H458.1M0 233.20H458.1M0 249.87H458.1M0 266.53H458.1M0 283.20H458.1" stroke="#061000" stroke-width="1.15" fill="none" opacity=".92"/><path d="M0 0H458.1V286.6H0Z" stroke="#55632f" stroke-width="1" fill="none" opacity=".55"/><path d="M7.2 242.6 L15.7 243.6 L22.7 242.8 L40.7 242.4 L58.7 243.2 L72.7 243.4 L88.7 243.6 L98.7 242.4 L106.7 243.6 L116.7 242.8 L132.7 243.0 L140.7 243.8 L150.7 242.4 L162.7 243.8 L178.7 244.0 L184.7 245.2 L192.7 244.0 L210.7 244.8 L226.7 245.8 L240.7 245.4 L252.7 246.4 L268.7 247.4 L274.7 249.4 L282.7 252.4 L286.7 251.6 L290.7 247.8 L296.7 246.4 L310.7 245.8 L322.7 247.0 L334.7 248.0 L338.7 250.4 L342.7 251.8 L350.7 250.8 L360.7 248.0 L368.7 246.8 L376.7 247.0 L381.7 245.2 L386.7 246.4 L394.7 248.8 L403.7 251.0 L408.7 249.8 L413.7 247.0 L420.7 246.6 L424.7 245.4 L432.7 246.0 L442.7 247.4 L450.7 249.0 L458.1 250.4" stroke="#eeec18" stroke-width="2.15" fill="none" stroke-linejoin="round" stroke-linecap="round"/></svg>
<span class="t" style="left:489.69px;top:521.00px;font-size:16.6px;color:#111;font-weight:700;transform:scaleX(1.0727);">Spare Part Code:</span>
<span class="t" style="left:489.69px;top:543.00px;font-size:16.6px;color:#222;transform:scaleX(1.0119);">61600.404.00</span>
<span class="t" style="left:489.69px;top:563.00px;font-size:16.6px;color:#111;font-weight:700;transform:scaleX(1.0793);">ECU Type:</span>
<span class="t" style="left:489.69px;top:584.00px;font-size:16.6px;color:#222;transform:scaleX(1.0391);">IAW-18FD</span>
<span class="t" style="left:489.69px;top:605.00px;font-size:16.6px;color:#111;font-weight:700;transform:scaleX(1.0499);">Car Model:</span>
<span class="t" style="left:489.69px;top:626.00px;font-size:16.6px;color:#222;transform:scaleX(1.0111);">Punto 1242 FIRE 16V CEE F2</span>
<div style="left:144.2px;top:720.4px;width:817.2px;height:1px;background:#dadada;box-shadow:0 1px 0 #fbfbfb;"></div>
<span class="t" style="left:387.93px;top:683.00px;font-size:12.2px;color:#1f1f1f;transform:scaleX(0.8941);-webkit-text-stroke:.28px #1f1f1f;">System AC: OFF</span>
<span class="t" style="left:387.93px;top:703.00px;font-size:12.2px;color:#1f1f1f;transform:scaleX(0.9171);-webkit-text-stroke:.28px #1f1f1f;">Stepper AC: ON</span>
<span class="t" style="left:495.93px;top:683.00px;font-size:12.2px;color:#1f1f1f;transform:scaleX(0.9553);-webkit-text-stroke:.28px #1f1f1f;">ALFAU: -</span>
<span class="t" style="left:583.33px;top:683.00px;font-size:12.2px;color:#1f1f1f;transform:scaleX(0.9417);-webkit-text-stroke:.28px #1f1f1f;">ADOFFSET: -</span>
<span class="t" style="left:693.73px;top:683.00px;font-size:12.2px;color:#1f1f1f;transform:scaleX(0.9239);-webkit-text-stroke:.28px #1f1f1f;">ADOFFPL: -</span>
<span class="t" style="left:498.33px;top:703.00px;font-size:12.2px;color:#1f1f1f;transform:scaleX(0.9466);-webkit-text-stroke:.28px #1f1f1f;">ALFAUC: -</span>
<span class="t" style="left:590.53px;top:703.00px;font-size:12.2px;color:#1f1f1f;transform:scaleX(0.9244);-webkit-text-stroke:.28px #1f1f1f;">ADOFFPURG: -</span>
<span class="t" style="left:711.53px;top:703.00px;font-size:12.2px;color:#1f1f1f;transform:scaleX(0.9458);-webkit-text-stroke:.28px #1f1f1f;">ADGAIN: -</span>
<span class="t" style="left:148.31px;top:727.00px;font-size:12.5px;color:#1a1a1a;transform:scaleX(0.9397);-webkit-text-stroke:.28px #1a1a1a;">Status:</span>
<span class="t" style="left:195.01px;top:727.00px;font-size:12.5px;color:#1a1a1a;transform:scaleX(1.0117);-webkit-text-stroke:.28px #1a1a1a;">Connected</span>
<span class="t" style="left:262.61px;top:727.00px;font-size:12.5px;color:#1a1a1a;transform:scaleX(0.8904);-webkit-text-stroke:.28px #1a1a1a;">(ISO:</span>
<span class="t" style="left:296.21px;top:727.00px;font-size:12.5px;color:#1a1a1a;transform:scaleX(0.9755);-webkit-text-stroke:.28px #1a1a1a;">55-31-80-0D-16-29)</span>
<svg style="left:946.6px;top:730px;" width="12" height="12" viewBox="0 0 12 12"><rect x="8.4" y="1" width="2" height="2" fill="#b4b4b4"/><rect x="4.7" y="4.7" width="2" height="2" fill="#b4b4b4"/><rect x="8.4" y="4.7" width="2" height="2" fill="#b4b4b4"/><rect x="1" y="8.4" width="2" height="2" fill="#b4b4b4"/><rect x="4.7" y="8.4" width="2" height="2" fill="#b4b4b4"/><rect x="8.4" y="8.4" width="2" height="2" fill="#b4b4b4"/></svg>
<svg style="left:148px;top:683px;" width="32" height="30" viewBox="0 0 32 30"><g transform="rotate(-42 16 15)" fill="none" stroke="#8f8f8f"><path d="M0.500 15 L6 15" stroke-width="1.2"/><path d="M1 12.6 L4 15 L1 17.4" stroke-width="1"/><rect x="6" y="12.2" width="5" height="5.6" fill="#9a9a9a" stroke-width=".6"/><path d="M11 13 L20 13 L20 17 L11 17Z" stroke-width="1.1"/><path d="M13 13 L13 17 M15 13 L15 17 M17 13 L17 17" stroke-width=".8"/><rect x="20" y="11.6" width="4" height="6.800" fill="#a5a5a5" stroke-width=".7"/><path d="M24 13.400 L29 13.4 L29 16.6 L24 16.6" stroke-width="1.1"/><path d="M29 15 L31.500 15" stroke-width="1.4"/></g></svg>
<svg style="left:187.5px;top:687px;" width="33" height="25" viewBox="0 0 33 25"><path d="M1 8.600 L16 7.600 L16 10.400 L11 10.600 L10 12 L8.400 10.800 L6.600 12 L5 10.800 L1 10.600Z" fill="#0a0a0a"/><path d="M14.600 5 Q14.600 3.400 16.600 3.300 L26.600 2.800 Q31 3 31 8.600 Q31 13.800 26.600 14.200 L16.600 13.900 Q14.600 13.800 14.600 12.400Z" fill="#0a0a0a"/><ellipse cx="26.800" cy="8.500" rx="1.600" ry="2" fill="#f0f0f0"/><text x="16.400" y="23.400" font-family="Liberation Sans" font-weight="700" font-size="6.800" text-anchor="middle" fill="#111" stroke="#111" stroke-width=".35" textLength="24.500" lengthAdjust="spacingAndGlyphs">CODE</text></svg>
<svg style="left:226.5px;top:685px;" width="33" height="25" viewBox="0 0 33 25"><g fill="none" stroke-linejoin="round"><path d="M6.400 7.400 L9.600 7.400 L11.600 4.800 L21.400 4.800 L23.400 7.600 L27.200 7.600 L29.400 10 L31 10 L31 18.400 L29.400 18.400 L29.400 21 L25 21 L22.600 22.800 L10.600 22.800 L7.800 19.600 L6.400 19.600Z" stroke="#7fa888" stroke-width="1.150"/><path d="M13.400 3.400 L19.400 3.400" stroke="#2fa04a" stroke-width="1.700"/><path d="M2 8.400 L2 18 " stroke="#2fa04a" stroke-width="1.500"/><path d="M2 13 L6.400 13" stroke="#55a866" stroke-width="1.100"/></g></svg>
<svg style="left:272px;top:683.6px;" width="23" height="30" viewBox="0 0 23 30"><path d="M2.800 1 L2.800 28 M19.200 1 L19.200 28" stroke="#35a04e" stroke-width="2.300"/><path d="M2.800 13.400 L19.200 13.400" stroke="#6aa878" stroke-width="1.200"/><path d="M11 7 L11 21.600" stroke="#8f8f8f" stroke-width="1.200"/><path d="M7.600 27.800 Q11 24.800 14.600 27.800" stroke="#8a8a8a" stroke-width="1" fill="none"/></svg>
<svg style="left:309px;top:680px;" width="28" height="36" viewBox="0 0 28 36"><text x="2.600" y="32.800" font-family="Liberation Serif" font-size="41" fill="#050505" stroke="#050505" stroke-width=".5" textLength="21" lengthAdjust="spacingAndGlyphs">λ</text></svg>
<svg style="left:347.1px;top:682.4px;" width="30" height="32" viewBox="0 0 30 32"><g transform="rotate(0 15 16)"><path d="M15 9.800 L15 0.600" stroke="#0a0a0a" stroke-width="2.900"/><path d="M10.800 1.400 L15 5.600 L19.200 1.400" stroke="#0a0a0a" stroke-width="2.400" fill="none"/></g><g transform="rotate(60 15 16)"><path d="M15 9.800 L15 0.600" stroke="#0a0a0a" stroke-width="2.900"/><path d="M10.800 1.400 L15 5.600 L19.200 1.400" stroke="#0a0a0a" stroke-width="2.400" fill="none"/></g><g transform="rotate(120 15 16)"><path d="M15 9.800 L15 0.600" stroke="#0a0a0a" stroke-width="2.900"/><path d="M10.800 1.400 L15 5.600 L19.200 1.400" stroke="#0a0a0a" stroke-width="2.400" fill="none"/></g><g transform="rotate(180 15 16)"><path d="M15 9.800 L15 0.600" stroke="#0a0a0a" stroke-width="2.900"/><path d="M10.800 1.400 L15 5.600 L19.200 1.400" stroke="#0a0a0a" stroke-width="2.400" fill="none"/></g><g transform="rotate(240 15 16)"><path d="M15 9.800 L15 0.600" stroke="#0a0a0a" stroke-width="2.900"/><path d="M10.800 1.400 L15 5.600 L19.200 1.400" stroke="#0a0a0a" stroke-width="2.400" fill="none"/></g><g transform="rotate(300 15 16)"><path d="M15 9.800 L15 0.600" stroke="#0a0a0a" stroke-width="2.900"/><path d="M10.800 1.400 L15 5.600 L19.200 1.400" stroke="#0a0a0a" stroke-width="2.400" fill="none"/></g><path d="M15 8.600 L21.400 12.300 L21.400 19.700 L15 23.400 L8.600 19.700 L8.600 12.300Z" fill="none" stroke="#0a0a0a" stroke-width="2.900" stroke-linejoin="miter"/></svg>
<!-- p_taskbar -->
<div style="left:0px;top:857.6px;width:1600px;height:42.4px;background:linear-gradient(to right,#20343f 0%,#20333f 30%,#1f3041 50%,#1d2b44 70%,#1b2646 88%,#1a2446 100%);"></div>
<svg style="left:16.4px;top:870.8px;" width="17.2" height="17.2" viewBox="0 0 17.2 17.2"><path d="M0 2.500 L7.400 1.400 L7.400 8.300 L0 8.300Z M8.400 1.250 L17.400 0 L17.400 8.300 L8.400 8.300Z M0 9.300 L7.400 9.300 L7.400 16.200 L0 15.100Z M8.400 9.300 L17.400 9.300 L17.400 17.600 L8.400 16.350Z" fill="#fff"/></svg>
<svg style="left:64px;top:868px;" width="22" height="22" viewBox="0 0 22 22"><circle cx="13.400" cy="9.400" r="5.700" fill="none" stroke="#fff" stroke-width="1.250"/><path d="M9.400 13.500 L3 19.500" stroke="#fff" stroke-width="1.450"/></svg>
<svg style="left:115px;top:869px;" width="20" height="20" viewBox="0 0 20 20"><circle cx="10" cy="10" r="7.100" fill="none" stroke="#fff" stroke-width="2.100"/></svg>
<svg style="left:164.6px;top:869.6px;" width="20" height="19" viewBox="0 0 20 19"><rect x="3.300" y="6.500" width="9.600" height="7" fill="none" stroke="#fff" stroke-width="1.300"/><path d="M2.100 1.600 L2.100 4.300 L14.100 4.300 L14.100 1.600 M2.100 18.300 L2.100 15.700 L14.100 15.700 L14.100 18.300" stroke="#fff" stroke-width="1.200" fill="none"/><path d="M2.100 4.300 L2.100 15.700 M14.100 4.300 L14.100 15.700" stroke="#fff" stroke-width="1.200" opacity=".55"/><path d="M18.200 1.600 L18.200 6.500 M18.200 11.400 L18.200 18.300" stroke="#fff" stroke-width="1.300"/><circle cx="18.200" cy="8.700" r=".9" fill="#fff"/></svg>
<svg style="left:216px;top:867px;" width="24" height="24" viewBox="0 0 24 24"><circle cx="12" cy="12" r="11.6" fill="#fff"/><path d="M1.95 6.20 A11.6 11.6 0 0 1 22.05 6.20 L16.59 14.65 A5.3012 5.3012 0 0 0 12.00 6.70 Z" fill="#ea4335"/><path d="M22.05 6.20 A11.6 11.6 0 0 1 12.00 23.60 L7.41 14.65 A5.3012 5.3012 0 0 0 16.59 14.65 Z" fill="#fbc116"/><path d="M12.00 23.60 A11.6 11.6 0 0 1 1.95 6.20 L12.00 6.70 A5.3012 5.3012 0 0 0 7.41 14.65 Z" fill="#2fa24f"/><circle cx="12" cy="12" r="5.3012" fill="#fff"/><circle cx="12" cy="12" r="4.292" fill="#4b84ee"/></svg>
<svg style="left:267.6px;top:868.4px;" width="24.4" height="20.4" viewBox="0 0 24.4 20.4"><path d="M0.400 2 Q0.400 0.600 1.800 0.600 L8.600 0.600 L10.600 2.800 L22.600 2.800 Q24 2.800 24 4.200 L24 8 L0.400 8Z" fill="#e8a923"/><rect x="0.400" y="5.200" width="23.600" height="15" rx="1" fill="#fcd354"/><path d="M0.400 11.600 L24 11.600 L24 19.200 Q24 20.200 23 20.200 L1.400 20.200 Q0.400 20.200 0.400 19.200Z" fill="#f6c644"/><path d="M5.600 20.200 L5.600 13.600 Q5.600 12.600 6.600 12.600 L17.800 12.600 Q18.800 12.600 18.800 13.600 L18.800 20.200 L15 20.200 L15 16.400 L9.400 16.400 L9.400 20.200Z" fill="#3c8fe0"/></svg>
<svg style="left:318.4px;top:867px;" width="26" height="24" viewBox="0 0 26 24"><path d="M9 3.600 L20.600 0.600 L24.400 2.600 L24.400 13 L13 16.600 L9 14.600Z" fill="#d9dde2" stroke="#7d8792" stroke-width=".6"/><path d="M12.600 4.800 L22.600 2.200 L22.600 11 L12.600 14Z" fill="#1b3fb0"/><path d="M14 8 L20 4.600 L21.600 9.600Z" fill="#4a78e6" opacity=".8"/><path d="M1 13.600 L9.600 11 L17.600 14.600 L17.600 20.600 L9 23.400 L1 19.600Z" fill="#b9bfc6" stroke="#6d757f" stroke-width=".6"/><path d="M1 13.600 L9 17 L17.600 14.600 M9 17 L9 23.400" stroke="#858d97" stroke-width=".7" fill="none"/><path d="M3 16.600 L7.400 18.600 L7.400 20 L3 18Z" fill="#e9ecef"/><path d="M10.600 19.600 L16 17.800" stroke="#e9ecef" stroke-width="1.200"/></svg>
<svg style="left:371px;top:868px;" width="24" height="22" viewBox="0 0 24 22"><g transform="rotate(-42 12 11)" fill="none" stroke="#e0504c"><path d="M-1.500 11 L3.600 11" stroke-width="1.300"/><path d="M-0.500 8.200 L3 11 L-0.500 13.800" stroke-width="1.100"/><rect x="3.600" y="8.800" width="3.600" height="4.400" fill="#d8453f" stroke-width=".5"/><rect x="7.600" y="9.100" width="9" height="3.800" stroke-width="1.200"/><path d="M10 9 L10 13 M12.200 9 L12.200 13 M14.400 9 L14.400 13" stroke-width=".7" opacity=".8"/><rect x="16.800" y="7.600" width="3" height="6.800" fill="#e25a54" stroke-width=".5"/><path d="M19.800 9.600 L24.200 9.600 L24.200 12.400 L19.800 12.400" stroke-width="1.100"/><path d="M24.200 11 L26.800 11" stroke-width="1.500"/></g></svg>
<svg style="left:421.6px;top:866.6px;" width="27" height="25" viewBox="0 0 27 25"><path d="M2 15 C1.400 8.600 8 5 14 4.600 C20.600 4.400 24.400 8.400 23.600 13.400 C22.800 18.400 17.600 21.600 12.400 21.600 C9.600 21.600 10.600 18.600 8.400 18.400 C5.400 18.200 2.400 18.400 2 15Z" fill="#dfe8f2" stroke="#9fb0c4" stroke-width=".7"/><ellipse cx="10.600" cy="15.800" rx="1.700" ry="1.400" fill="#26343e"/><circle cx="5.600" cy="12.600" r="1.900" fill="#cf5a50"/><circle cx="9.400" cy="8.800" r="1.900" fill="#7fb45a"/><circle cx="14.400" cy="7.400" r="1.900" fill="#e3b84a"/><path d="M21.200 0.800 L24 1.800 L16 19.600 L13.800 21.800 L13.600 18.600Z" fill="#e8a85a" stroke="#b87a38" stroke-width=".4"/><path d="M13.600 18.600 L16 19.600 L12.800 23.400Z" fill="#c98a4a"/><path d="M21.200 0.800 L24 1.800 L22.800 4.400 L20.200 3.400Z" fill="#f2d8a0"/></svg>
<div style="left:311px;top:896.6px;width:42.2px;height:3.4px;background:#76b9ed;"></div>
<div style="left:362.6px;top:896.6px;width:42.2px;height:3.4px;background:#76b9ed;"></div>
<div style="left:414.2px;top:896.6px;width:42.2px;height:3.4px;background:#76b9ed;"></div>
<svg style="left:1207.6px;top:869px;" width="21" height="21" viewBox="0 0 21 21"><defs><radialGradient id="sun" cx=".4" cy=".35" r=".75"><stop offset="0" stop-color="#ffe36a"/><stop offset=".55" stop-color="#fcc02c"/><stop offset="1" stop-color="#f59a14"/></radialGradient></defs><circle cx="10.500" cy="10.500" r="10" fill="url(#sun)"/></svg>
<span class="t" style="left:1238.97px;top:873.00px;font-size:15px;color:#fff;transform:scaleX(0.9622);-webkit-text-stroke:.08px #fff;">31°C</span>
<span class="t" style="left:1278.97px;top:873.00px;font-size:15px;color:#fff;transform:scaleX(0.9789);-webkit-text-stroke:.08px #fff;">Sunny</span>
<svg style="left:1336px;top:874px;" width="16" height="12" viewBox="0 0 16 12"><path d="M1.800 9.400 L8 3.200 L14.200 9.400" stroke="#fff" stroke-width="1.300" fill="none"/></svg>
<svg style="left:1360px;top:874px;" width="19" height="12" viewBox="0 0 19 12"><rect x="1.200" y="1.600" width="14.400" height="8.800" fill="none" stroke="#fff" stroke-width="1.100"/><rect x="16" y="4" width="1.600" height="4" fill="#fff"/><rect x="2.800" y="3.200" width="5.600" height="5.600" fill="#fff"/></svg>
<svg style="left:1386.6px;top:872.6px;" width="16" height="15" viewBox="0 0 16 15"><g fill="none" stroke="#fff" stroke-width="1.250"><path d="M1 13.600 A12.400 12.400 0 0 1 13.600 1.200" opacity=".55"/><path d="M4.600 13.600 A8.800 8.800 0 0 1 13.600 4.800" opacity=".8"/><path d="M8.200 13.600 A5.200 5.200 0 0 1 13.600 8.400"/></g><circle cx="12.400" cy="12.400" r="1.500" fill="#fff"/></svg>
<svg style="left:1409.6px;top:871.6px;" width="19" height="16" viewBox="0 0 19 16"><path d="M1.200 5.600 L4 5.600 L7.800 2 L7.800 14 L4 10.400 L1.200 10.400Z" fill="none" stroke="#fff" stroke-width="1.100" stroke-linejoin="round"/><path d="M10.400 5.400 Q12 8 10.400 10.600" stroke="#fff" stroke-width="1.100" fill="none"/><path d="M12.800 3.600 Q15.600 8 12.800 12.400" stroke="#fff" stroke-width="1.100" fill="none" opacity=".85"/><path d="M15.200 1.800 Q19 8 15.200 14.200" stroke="#fff" stroke-width="1.100" fill="none" opacity=".45"/></svg>
<span class="t" style="left:1437.82px;top:874.00px;font-size:12.4px;color:#fff;transform:scaleX(0.9294);-webkit-text-stroke:.28px #fff;">ENG</span>
<span class="t" style="left:1491.72px;top:864.00px;font-size:12.4px;color:#fff;transform:scaleX(0.9661);-webkit-text-stroke:.28px #fff;">20:20</span>
<span class="t" style="left:1475.92px;top:883.00px;font-size:12.4px;color:#fff;transform:scaleX(0.9715);-webkit-text-stroke:.28px #fff;">15.7.2021 г.</span>
<svg style="left:1556px;top:870px;" width="20" height="19" viewBox="0 0 20 19"><path d="M1.600 1.400 L18 1.400 L18 13.600 L11.600 13.600 L9 16.400 L9 13.600 L1.600 13.600Z" fill="none" stroke="#fff" stroke-width="1.200" stroke-linejoin="miter"/></svg>
<div style="left:1595.4px;top:857.6px;width:1px;height:42.4px;background:#6d7686;"></div>
</body></html>
